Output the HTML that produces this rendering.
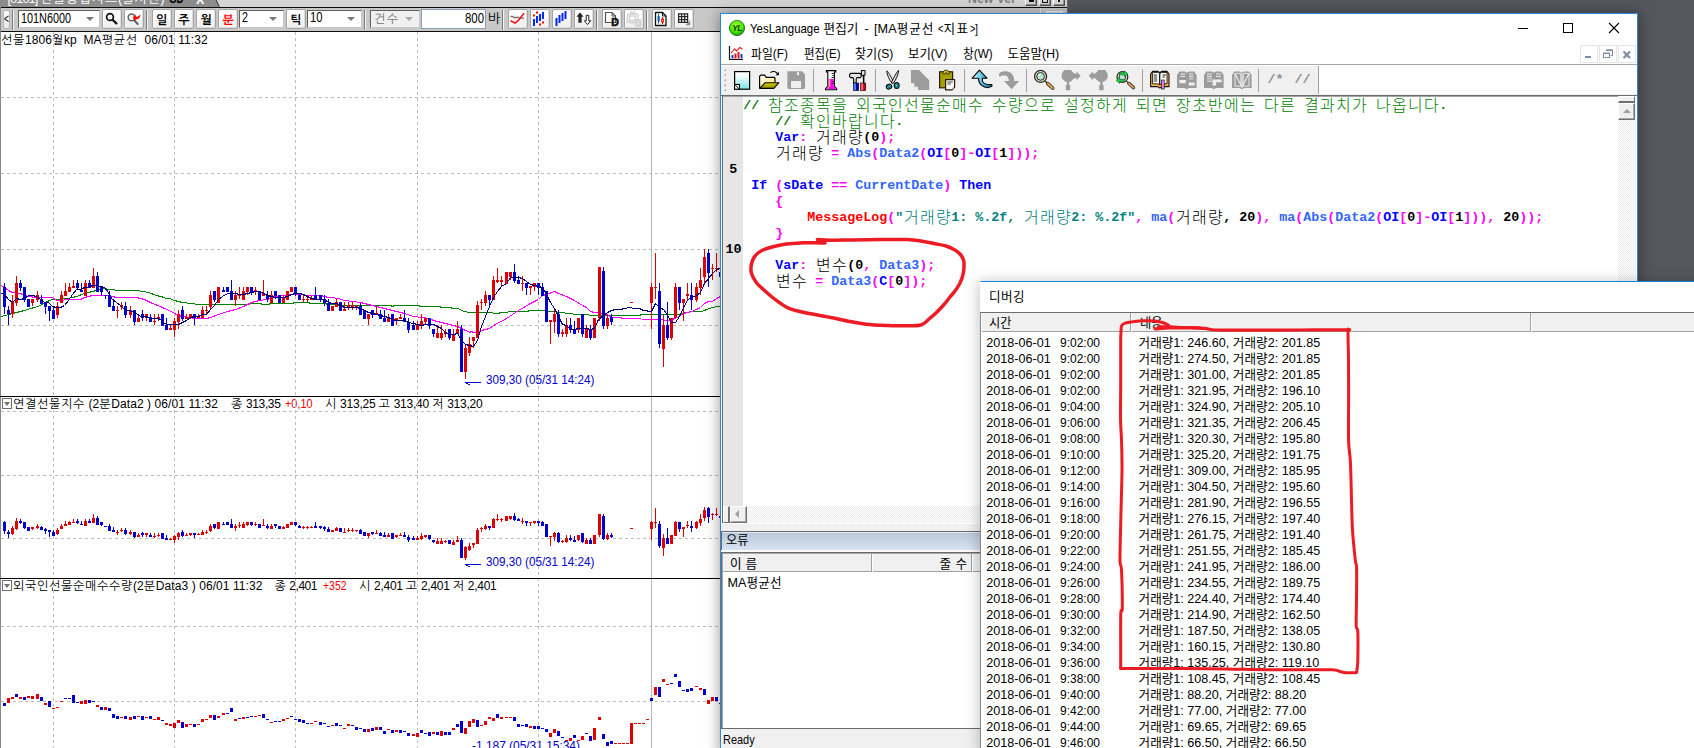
<!DOCTYPE html>
<html lang="ko"><head><meta charset="utf-8"><title>YesLanguage 편집기</title>
<style>
html,body{margin:0;padding:0;}
body{width:1694px;height:748px;overflow:hidden;background:#54575d;}
#root{position:relative;width:1694px;height:748px;overflow:hidden;background:#54575d;}
#root *{box-sizing:border-box;}
.a{position:absolute;}
.t{position:absolute;white-space:pre;line-height:16px;height:16px;color:#000;}
.gl{font-family:"Liberation Sans","NanumGothic",sans-serif;font-size:12px;}
.mg{font-family:"Liberation Sans","Noto Sans CJK KR",sans-serif;font-size:12.6px;}
.glb{font-family:"Liberation Sans","NanumGothic",sans-serif;font-size:12px;font-weight:bold;}
/* left app */
#tabbar{left:0;top:0;width:1068px;height:7px;background:#d4d4d4;overflow:hidden;}
#tab{left:0;top:0;width:222px;height:7px;background:#8c8c8c;}
#ltool{left:0;top:8px;width:1068px;height:23px;background:#c8c8c8;}
.btn{position:absolute;top:9px;height:20px;width:20px;border:1px solid #a4a4a4;border-radius:2px;background:linear-gradient(#fff,#fff 48%,#f2f2f2 52%,#f0f0f0);box-shadow:inset 1px 1px 0 0 #fff,inset -1px -1px 0 0 #dedede;}
.cmb{position:absolute;top:10px;height:18px;background:#fff;border:1px solid #c8c8c8;border-top:1px solid #606060;border-left:1px solid #606060;}
.sep{position:absolute;top:10px;height:20px;width:2px;border-left:1px solid #7a7a7a;border-right:1px solid #f4f4f4;}
.arr{position:absolute;width:0;height:0;border-left:4px solid transparent;border-right:4px solid transparent;border-top:4px solid #7a7a7a;}
#chartbg{left:0;top:32px;width:720px;height:716px;background:#fff;}
#edwin{left:720px;top:13px;width:918px;height:740px;background:#fff;border:1px solid #2f86d6;box-shadow:0 1px 13px 1px rgba(0,0,0,0.36);}
#dbwin{left:980px;top:281px;width:720px;height:470px;background:#fff;border-top:1px solid #1c82d8;border-left:1px solid #d0d8e0;box-shadow:0 2px 12px 2px rgba(0,0,0,0.22);}
.cl{position:absolute;white-space:pre;font-family:"Liberation Mono",monospace;font-weight:bold;font-size:13.333px;line-height:16px;height:16px;}
.ck{position:absolute;white-space:pre;font-family:"Liberation Mono","Noto Sans CJK KR",monospace;font-weight:300;font-size:16px;letter-spacing:1.28px;line-height:16px;height:16px;}

</style></head>
<body>
<div id="root">
<div class="a" id="tabbar"><div class="a" id="tab"></div>
<div class="a" style="left:215.5px;top:-6px;width:14px;height:14px;background:#d4d4d4;border-left:1px solid #222;transform:skewX(26deg)"></div>
<div class="t" style="left:7.50px;top:-9.20px;font-family:'Liberation Sans','NanumGothic',sans-serif;font-size:12px;font-size:13px;letter-spacing:-1.047px;color:#fff;line-height:16px;height:16px">[0101] <span style="letter-spacing:0.780px">선물종합차트</span>(<span style="letter-spacing:0.780px">실시간</span>)</div>
<div class="t" style="left:169.00px;top:-8.90px;font-family:'Liberation Sans','NanumGothic',sans-serif;font-size:12px;font-weight:bold;font-size:12px;transform:scaleX(0.8056);transform-origin:0 50%;line-height:16px;height:16px">GD</div>
<div class="t" style="left:196.00px;top:-8.00px;font-family:'Liberation Sans','NanumGothic',sans-serif;font-size:12px;font-weight:bold;font-size:12.5px;letter-spacing:0.000px;color:#fff;line-height:16px;height:16px">X</div>
<div class="t" style="left:968.00px;top:-9.00px;font-family:'Liberation Sans','NanumGothic',sans-serif;font-size:12px;font-weight:bold;font-size:13px;transform:scaleX(0.9487);transform-origin:0 50%;color:#7e7e7e;line-height:16px;height:16px">New Ver</div>
<div class="a" style="left:1025px;top:-6px;width:12px;height:12px;background:#d6d6d6;border:1px solid #fff;border-right:1px solid #505050;border-bottom:1px solid #505050;box-shadow:inset -1px -1px 0 #909090;"></div>
<div class="a" style="left:1039px;top:-6px;width:12px;height:12px;background:#d6d6d6;border:1px solid #fff;border-right:1px solid #505050;border-bottom:1px solid #505050;box-shadow:inset -1px -1px 0 #909090;"></div>
<div class="a" style="left:1053px;top:-6px;width:12px;height:12px;background:#d6d6d6;border:1px solid #fff;border-right:1px solid #505050;border-bottom:1px solid #505050;box-shadow:inset -1px -1px 0 #909090;"></div>
<div class="a" style="left:1029px;top:-2px;width:5px;height:4px;background:#111;"></div>
<div class="a" style="left:1042px;top:-3px;width:6px;height:6px;background:transparent;border:1px solid #111;border-top:2px solid #111;"></div>
<div class="a" style="left:1058px;top:-2px;width:2px;height:4px;background:#111;"></div>
</div>
<div class="a" style="left:0px;top:7px;width:1068px;height:1px;background:#0c0c0c;"></div>
<div class="a" id="ltool"></div>
<div class="a" style="left:1046px;top:11px;width:17px;height:3px;background:#dcdcdc;border:1px solid #f4f4f4;border-bottom:none;"></div>
<div class="a" style="left:1040px;top:8px;width:1px;height:6px;background:#e4e4e4;"></div>
<div class="a" style="left:1067px;top:0px;width:1px;height:14px;background:#6a6a6a;"></div>
<div class="a" style="left:0px;top:31px;width:720px;height:1px;background:#0c0c0c;"></div>
<div class="a" id="chartbg"></div>
<div class="a" style="left:3px;top:10px;width:7px;height:19px;border:1px solid #b4b4b4;border-radius:2px;background:linear-gradient(#fefefe,#e6e6e6)"></div>
<div class="sep" style="left:12px"></div>
<div class="cmb" style="left:18px;width:82px;background:#fff"></div>
<div class="btn" style="left:102px"></div>
<div class="btn" style="left:124px"></div>
<div class="sep" style="left:146px"></div>
<div class="btn" style="left:152px"></div>
<div class="btn" style="left:174px"></div>
<div class="btn" style="left:196px"></div>
<div class="btn" style="left:218px"></div>
<div class="cmb" style="left:239px;width:45px;background:#fff"></div>
<div class="btn" style="left:286px"></div>
<div class="cmb" style="left:307px;width:55px;background:#fff"></div>
<div class="sep" style="left:364px"></div>
<div class="cmb" style="left:370px;width:50px;background:#f0f0f0"></div>
<div class="a" style="left:421px;top:9px;width:65px;height:20px;background:#fff;border:1px solid #909cb6;"></div>
<div class="sep" style="left:502px"></div>
<div class="btn" style="left:508px"></div>
<div class="btn" style="left:530px"></div>
<div class="btn" style="left:552px"></div>
<div class="btn" style="left:574px"></div>
<div class="sep" style="left:596px"></div>
<div class="btn" style="left:602px"></div>
<div class="btn" style="left:624px"></div>
<div class="sep" style="left:646px"></div>
<div class="btn" style="left:652px"></div>
<div class="btn" style="left:674px"></div>
<svg class="a" style="left:102px;top:9px" width="20" height="20" viewBox="0 0 20 20"><circle cx="8" cy="8" r="3.4" fill="none" stroke="#111" stroke-width="1.7"/><path d="M10.8 11l3.6 3.4" stroke="#111" stroke-width="2.2" stroke-linecap="round"/></svg>
<svg class="a" style="left:124px;top:9px" width="20" height="20" viewBox="0 0 20 20"><circle cx="7.6" cy="8.4" r="3.4" fill="none" stroke="#606060" stroke-width="1.6"/><path d="M10.5 11.6l3.2 3.4" stroke="#606060" stroke-width="2" stroke-linecap="round"/><path d="M8.6 8.4l3-3v2.2c2.4.4 3.6-.4 4.6-2.4c.4 3.2-1.6 5.2-4.6 5.2v2z" fill="#f00"/></svg>
<svg class="a" style="left:508px;top:9px" width="20" height="20" viewBox="0 0 20 20"><path d="M2.5 7.5h2l1.5 1h4.5l1 .6h4.5" fill="none" stroke="#707070" stroke-width="1.4"/><path d="M2.5 11.6l4.6 2.6l3.4-3l5.6-7" fill="none" stroke="#f00" stroke-width="1.5"/></svg>
<svg class="a" style="left:530px;top:9px" width="20" height="20" viewBox="0 0 20 20"><path d="M4 10v7M7 7v7M10 5v7M13 3v7" stroke="#0028ff" stroke-width="2" fill="none"/><path d="M3 5.5h2v2h-2zM6 2.5h2v2h-2zM9 14.5h2v2h-2zM12 12.5h2v2h-2z" fill="#f00"/></svg>
<svg class="a" style="left:552px;top:9px" width="20" height="20" viewBox="0 0 20 20"><path d="M4.5 9v8M7.5 6v8M10.5 4v8M13.5 2v8" stroke="#0028ff" stroke-width="2" fill="none"/></svg>
<svg class="a" style="left:574px;top:9px" width="20" height="20" viewBox="0 0 20 20"><path d="M6 3.5l3.6 4.2h-2v6h-3.2v-6h-2z" fill="#222"/><path d="M13.5 15.6l-3.2-3.8h1.9v-5.4h2.6v5.4h1.9z" fill="#fff" stroke="#222" stroke-width="1"/></svg>
<svg class="a" style="left:602px;top:9px" width="20" height="20" viewBox="0 0 20 20"><path d="M3.5 3.5h6.5l3.5 3.5v6.5h-10z" fill="#fff" stroke="#555" stroke-width="1.2"/><path d="M10 3.5v3.5h3.5" fill="none" stroke="#555" stroke-width="1"/><text x="9.2" y="17.2" font-family="Liberation Sans,sans-serif" font-weight="bold" font-size="10.5" fill="#111" stroke="#111" stroke-width="0.6">D</text></svg>
<svg class="a" style="left:624px;top:9px" width="20" height="20" viewBox="0 0 20 20"><g fill="none" stroke="#d0d0d0" stroke-width="1.3"><path d="M6 2l2.5 2.5L11 2"/><rect x="3.5" y="5" width="10.5" height="8.5" rx="1"/><rect x="5.5" y="7" width="6" height="4.5"/><path d="M12 11h4.5v6H12z" fill="#ddd"/></g></svg>
<svg class="a" style="left:652px;top:9px" width="20" height="20" viewBox="0 0 20 20"><path d="M3.5 3.5h7l3.5 3.5v9.5h-10.5z" fill="#fff" stroke="#111" stroke-width="1.3"/><path d="M10.5 3.5v3.5h3.5" fill="none" stroke="#111" stroke-width="1"/><path d="M6.5 5v9.5" stroke="#0a64a0" stroke-width="1"/><rect x="5.5" y="7" width="2.2" height="5.5" fill="#0a64a0"/><path d="M10.5 8v7" stroke="#f00" stroke-width="1"/><rect x="9.6" y="10" width="1.9" height="3" fill="#fff" stroke="#f00" stroke-width="0.9"/></svg>
<svg class="a" style="left:674px;top:9px" width="20" height="20" viewBox="0 0 20 20"><rect x="4" y="4.3" width="10.2" height="9.7" fill="#fff"/><g stroke="#282828" stroke-width="1.25" fill="none"><path d="M4.6 4.900h9v8.500h-9zM4.600 7.700h9M4.600 10.600h9M7.600 4.900v8.500M10.600 4.900v8.500"/></g><path d="M16.200 11.400v4.800h-4.800z" fill="#8a8a8a"/></svg>
<div class="arr" style="left:86px;top:17px;border-top-color:#7a7a7a"></div>
<div class="arr" style="left:269px;top:17px;border-top-color:#7a7a7a"></div>
<div class="arr" style="left:347px;top:17px;border-top-color:#7a7a7a"></div>
<div class="arr" style="left:405px;top:17px;border-top-color:#a8a8a8"></div>
<div class="t" style="left:3.60px;top:10.80px;font-family:'Liberation Sans','NanumGothic',sans-serif;font-size:12px;font-size:12px;transform:scaleX(0.7127);transform-origin:0 50%;line-height:16px;height:16px">&lt;</div>
<div class="t" style="left:21.00px;top:10.00px;font-family:'Liberation Sans','NanumGothic',sans-serif;font-size:12px;font-size:14px;transform:scaleX(0.7737);transform-origin:0 50%;line-height:16px;height:16px">101N6000</div>
<div class="t" style="left:156.00px;top:11.80px;font-family:'Liberation Sans','NanumGothic',sans-serif;font-size:12px;font-weight:bold;line-height:16px;height:16px">일</div>
<div class="t" style="left:178.30px;top:11.80px;font-family:'Liberation Sans','NanumGothic',sans-serif;font-size:12px;font-weight:bold;line-height:16px;height:16px">주</div>
<div class="t" style="left:200.50px;top:11.80px;font-family:'Liberation Sans','NanumGothic',sans-serif;font-size:12px;font-weight:bold;line-height:16px;height:16px">월</div>
<div class="t" style="left:222.50px;top:11.80px;font-family:'Liberation Sans','NanumGothic',sans-serif;font-size:12px;font-weight:bold;color:#f00;line-height:16px;height:16px">분</div>
<div class="t" style="left:290.50px;top:11.80px;font-family:'Liberation Sans','NanumGothic',sans-serif;font-size:12px;font-weight:bold;line-height:16px;height:16px">틱</div>
<div class="t" style="left:242.00px;top:9.20px;font-family:'Liberation Sans','NanumGothic',sans-serif;font-size:12px;font-size:14px;transform:scaleX(0.7695);transform-origin:0 50%;line-height:16px;height:16px">2</div>
<div class="t" style="left:310.00px;top:9.20px;font-family:'Liberation Sans','NanumGothic',sans-serif;font-size:12px;font-size:14px;transform:scaleX(0.8024);transform-origin:0 50%;line-height:16px;height:16px">10</div>
<div class="t" style="left:374.00px;top:11.00px;font-family:'Liberation Sans','NanumGothic',sans-serif;font-size:12px;letter-spacing:1.438px;color:#707070;line-height:16px;height:16px">건수</div>
<div class="t" style="left:465.20px;top:10.00px;font-family:'Liberation Sans','NanumGothic',sans-serif;font-size:12px;font-size:14px;transform:scaleX(0.8134);transform-origin:0 50%;line-height:16px;height:16px">800</div>
<div class="t" style="left:488.00px;top:10.60px;font-family:'Liberation Sans','NanumGothic',sans-serif;font-size:12px;font-size:13.4px;letter-spacing:0.000px;line-height:16px;height:16px">바</div>
<div class="t" style="left:1.00px;top:32.00px;font-family:'Liberation Sans','NanumGothic',sans-serif;font-size:12px;letter-spacing:0.063px;line-height:16px;height:16px"><span style="letter-spacing:0.719px">선물</span>1806<span style="letter-spacing:0.719px">월</span>kp  MA<span style="letter-spacing:0.719px">평균선</span>  06/01 11:32</div>
<div class="t" style="left:13.00px;top:396.00px;font-family:'Liberation Sans','NanumGothic',sans-serif;font-size:12px;letter-spacing:0.082px;line-height:16px;height:16px"><span style="letter-spacing:0.719px">연결선물지수</span> (2<span style="letter-spacing:0.719px">분</span>Data2 ) 06/01 11:32</div>
<div class="t" style="left:231.00px;top:396.00px;font-family:'Liberation Sans','NanumGothic',sans-serif;font-size:12px;letter-spacing:-0.364px;line-height:16px;height:16px"><span style="letter-spacing:0.719px">종</span> 313,35</div>
<div class="t" style="left:285.00px;top:396.00px;font-family:'Liberation Sans','NanumGothic',sans-serif;font-size:12px;transform:scaleX(0.9053);transform-origin:0 50%;color:#f00000;line-height:16px;height:16px">+0,10</div>
<div class="t" style="left:325.00px;top:396.00px;font-family:'Liberation Sans','NanumGothic',sans-serif;font-size:12px;letter-spacing:-0.230px;line-height:16px;height:16px"><span style="letter-spacing:0.719px">시</span> 313,25 <span style="letter-spacing:0.719px">고</span> 313,40 <span style="letter-spacing:0.719px">저</span> 313,20</div>
<div class="t" style="left:13.00px;top:578.00px;font-family:'Liberation Sans','NanumGothic',sans-serif;font-size:12px;letter-spacing:0.078px;line-height:16px;height:16px"><span style="letter-spacing:0.719px">외국인선물순매수수량</span>(2<span style="letter-spacing:0.719px">분</span>Data3 ) 06/01 11:32</div>
<div class="t" style="left:274.50px;top:578.00px;font-family:'Liberation Sans','NanumGothic',sans-serif;font-size:12px;letter-spacing:-0.479px;line-height:16px;height:16px"><span style="letter-spacing:0.719px">종</span> 2,401</div>
<div class="t" style="left:322.50px;top:578.00px;font-family:'Liberation Sans','NanumGothic',sans-serif;font-size:12px;transform:scaleX(0.8694);transform-origin:0 50%;color:#f00000;line-height:16px;height:16px">+352</div>
<div class="t" style="left:359.00px;top:578.00px;font-family:'Liberation Sans','NanumGothic',sans-serif;font-size:12px;letter-spacing:-0.263px;line-height:16px;height:16px"><span style="letter-spacing:0.719px">시</span> 2,401 <span style="letter-spacing:0.719px">고</span> 2,401 <span style="letter-spacing:0.719px">저</span> 2,401</div>
<div class="t" style="left:485.50px;top:372.00px;font-family:'Liberation Sans','NanumGothic',sans-serif;font-size:12px;transform:scaleX(0.9738);transform-origin:0 50%;color:#0000d0;line-height:16px;height:16px">309,30 (05/31 14:24)</div>
<div class="t" style="left:485.50px;top:554.00px;font-family:'Liberation Sans','NanumGothic',sans-serif;font-size:12px;transform:scaleX(0.9738);transform-origin:0 50%;color:#0000d0;line-height:16px;height:16px">309,30 (05/31 14:24)</div>
<div class="t" style="left:472.00px;top:737.50px;font-family:'Liberation Sans','NanumGothic',sans-serif;font-size:12px;letter-spacing:-0.039px;color:#0000d0;line-height:16px;height:16px">-1,187 (05/31 15:34)</div>
<div class="a" style="left:2px;top:398px;width:10px;height:11px;border:1px solid #707070;background:#fff"><div class="arr" style="left:1px;top:3px;border-left-width:3px;border-right-width:3px;border-top-color:#707070"></div></div>
<div class="a" style="left:2px;top:580px;width:10px;height:11px;border:1px solid #707070;background:#fff"><div class="arr" style="left:1px;top:3px;border-left-width:3px;border-right-width:3px;border-top-color:#707070"></div></div>
<div class="a" style="left:0px;top:0px;width:1px;height:748px;background:#8a8a8a;"></div>
<svg class="a" style="left:0;top:32px" width="720" height="716" viewBox="0 32 720 716" shape-rendering="crispEdges">
<path d="M53.5 32V748M174.5 32V748M295.5 32V748M417.5 32V748M538.5 32V748M1 97.5H720M1 173.5H720M1 249.5H720M1 325.5H720M1 411.5H720M1 475.5H720M1 538.5H720M1 626.5H720M1 701.5H720" stroke="#bdbdbd" stroke-width="1" stroke-dasharray="3 3" fill="none"/>
<path d="M651.5 32V748" stroke="#b4b4b4" stroke-width="1" fill="none"/>
<path d="M0 396.5H720M0 578.5H720" stroke="#000" stroke-width="1" fill="none"/>
<polyline points="1.5,316.5 8.5,314.5 12.5,313.5 24.5,310.5 40.5,305.5 44.5,302.5 52.5,299.5 68.5,298.5 76.5,296.5 84.5,293.5 92.5,291.5 96.5,290.5 100.5,289.5 104.5,288.5 108.5,289.5 120.5,290.5 136.5,290.5 148.5,292.5 156.5,295.5 164.5,297.5 165.5,298.5 169.5,298.5 174.5,300.5 182.5,302.5 190.5,303.5 198.5,304.5 247.5,304.5 251.5,303.5 259.5,303.5 263.5,304.5 267.5,304.5 271.5,303.5 291.5,303.5 295.5,302.5 307.5,302.5 311.5,303.5 324.5,303.5 328.5,304.5 330.5,304.5 340.5,305.5 390.5,305.5 392.5,306.5 394.5,305.5 418.5,305.5 420.5,306.5 439.5,306.5 441.5,307.5 450.5,307.5 452.5,308.5 458.5,308.5 461.5,310.5 468.5,312.5 470.5,312.5 470.5,312.5 486.5,312.5 498.5,313.5 500.5,312.5 507.5,312.5 508.5,311.5 527.5,311.5 529.5,310.5 546.5,310.5 547.5,311.5 556.5,311.5 557.5,312.5 564.5,312.5 565.5,313.5 572.5,313.5 573.5,314.5 588.5,314.5 589.5,315.5 600.5,315.5 601.5,315.5 639.5,315.5 641.5,314.5 679.5,314.5 681.5,313.5 685.5,312.5 693.5,311.5 701.5,311.5 709.5,308.5 716.5,306.5 720.5,306.5 723.5,305.5" stroke="#008000" stroke-width="1" fill="none"/>
<polyline points="1.5,285.5 4.5,287.5 8.5,290.5 12.5,292.5 20.5,293.5 24.5,295.5 28.5,296.5 36.5,297.5 52.5,297.5 56.5,300.5 72.5,299.5 80.5,299.5 84.5,297.5 92.5,295.5 108.5,295.5 116.5,297.5 136.5,297.5 144.5,299.5 152.5,303.5 160.5,306.5 164.5,308.5 169.5,310.5 174.5,313.5 178.5,315.5 182.5,316.5 190.5,317.5 194.5,318.5 206.5,318.5 210.5,317.5 218.5,314.5 227.5,311.5 235.5,309.5 243.5,306.5 251.5,302.5 259.5,300.5 267.5,299.5 271.5,297.5 275.5,296.5 283.5,295.5 291.5,294.5 299.5,294.5 307.5,295.5 320.5,295.5 324.5,296.5 328.5,297.5 330.5,297.5 338.5,298.5 344.5,300.5 352.5,301.5 360.5,302.5 368.5,304.5 376.5,306.5 384.5,308.5 392.5,310.5 400.5,312.5 404.5,313.5 413.5,316.5 421.5,317.5 429.5,318.5 433.5,320.5 441.5,322.5 449.5,324.5 457.5,326.5 461.5,328.5 465.5,330.5 470.5,332.5 470.5,331.5 474.5,332.5 481.5,330.5 489.5,328.5 493.5,325.5 506.5,318.5 518.5,310.5 530.5,303.5 538.5,299.5 542.5,295.5 546.5,294.5 554.5,291.5 558.5,293.5 566.5,296.5 574.5,300.5 582.5,305.5 586.5,307.5 590.5,311.5 594.5,312.5 599.5,312.5 603.5,314.5 607.5,314.5 611.5,317.5 620.5,317.5 622.5,318.5 659.5,319.5 667.5,320.5 675.5,318.5 683.5,313.5 691.5,311.5 696.5,309.5 700.5,307.5 704.5,303.5 708.5,301.5 712.5,301.5 716.5,298.5 720.5,296.5 723.5,294.5" stroke="#ff00ff" stroke-width="1" fill="none"/>
<path d="M12 295h1v23h-1zM11 302h3v12h-3zM12 526h1v9h-1zM11 528h3v6h-3zM16 276h1v30h-1zM15 283h3v20h-3zM16 518h1v12h-1zM15 521h3v8h-3zM32 299h1v7h-1zM31 299h3v4h-3zM32 527h1v3h-1zM31 527h3v2h-3zM37 291h1v11h-1zM36 295h3v5h-3zM37 524h1v5h-1zM36 526h3v2h-3zM57 302h1v16h-1zM56 306h3v9h-3zM57 528h1v7h-1zM56 530h3v4h-3zM61 291h1v12h-1zM60 295h3v8h-3zM61 524h1v5h-1zM60 526h3v3h-3zM65 283h1v13h-1zM64 291h3v5h-3zM65 521h1v5h-1zM64 524h3v2h-3zM69 283h1v9h-1zM68 287h3v5h-3zM69 521h1v4h-1zM68 522h3v3h-3zM73 280h1v8h-1zM72 286h3v2h-3zM73 519h1v4h-1zM72 522h3v1h-3zM85 280h1v16h-1zM84 283h3v13h-3zM85 519h1v7h-1zM84 521h3v5h-3zM93 268h1v20h-1zM92 276h3v12h-3zM93 514h1v9h-1zM92 518h3v5h-3zM117 306h1v12h-1zM116 310h3v1h-3zM117 530h1v5h-1zM116 532h3v1h-3zM121 302h1v8h-1zM120 305h3v2h-3zM121 528h1v4h-1zM120 530h3v1h-3zM130 306h1v12h-1zM129 310h3v5h-3zM130 530h1v5h-1zM129 532h3v2h-3zM138 314h1v8h-1zM137 318h3v4h-3zM138 533h1v4h-1zM137 535h3v2h-3zM146 314h1v7h-1zM145 314h3v4h-3zM146 533h1v4h-1zM145 533h3v2h-3zM154 314h1v11h-1zM153 321h3v1h-3zM154 533h1v5h-1zM153 536h3v1h-3zM158 314h1v7h-1zM157 317h3v2h-3zM158 533h1v4h-1zM157 535h3v1h-3zM170 325h1v5h-1zM169 328h3v2h-3zM170 538h1v2h-1zM169 539h3v1h-3zM174 318h1v19h-1zM173 321h3v9h-3zM174 535h1v8h-1zM173 536h3v4h-3zM178 310h1v19h-1zM177 314h3v8h-3zM178 532h1v8h-1zM177 533h3v4h-3zM186 314h1v5h-1zM185 317h3v2h-3zM186 533h1v3h-1zM185 535h3v1h-3zM190 314h1v5h-1zM189 314h3v4h-3zM190 533h1v3h-1zM189 533h3v2h-3zM198 314h1v4h-1zM197 316h3v2h-3zM198 533h1v2h-1zM197 534h3v1h-3zM202 306h1v12h-1zM201 310h3v8h-3zM202 530h1v5h-1zM201 532h3v3h-3zM206 306h1v8h-1zM205 310h3v1h-3zM206 530h1v4h-1zM205 532h3v1h-3zM210 291h1v19h-1zM209 295h3v12h-3zM210 524h1v8h-1zM209 526h3v5h-3zM217 287h3v16h-3zM217 522h3v7h-3zM235 291h1v15h-1zM234 295h3v5h-3zM235 524h1v7h-1zM234 526h3v2h-3zM239 287h1v12h-1zM238 294h3v2h-3zM239 522h1v6h-1zM238 525h3v1h-3zM243 287h1v13h-1zM242 291h3v9h-3zM243 522h1v6h-1zM242 524h3v4h-3zM247 287h1v8h-1zM246 287h3v5h-3zM247 522h1v4h-1zM246 522h3v3h-3zM255 287h1v8h-1zM254 290h3v2h-3zM255 522h1v4h-1zM254 524h3v1h-3zM263 280h1v16h-1zM262 294h3v2h-3zM263 519h1v7h-1zM262 525h3v1h-3zM271 291h1v12h-1zM270 295h3v8h-3zM271 524h1v5h-1zM270 526h3v3h-3zM283 295h1v8h-1zM282 298h3v5h-3zM283 526h1v3h-1zM282 527h3v2h-3zM286 291h3v9h-3zM286 524h3v4h-3zM290 287h3v5h-3zM290 522h3v3h-3zM303 295h1v7h-1zM302 299h3v1h-3zM303 526h1v3h-1zM302 527h3v1h-3zM307 295h1v7h-1zM306 299h3v1h-3zM307 526h1v3h-1zM306 527h3v1h-3zM311 296h1v4h-1zM310 298h3v2h-3zM311 526h1v2h-1zM310 527h3v1h-3zM331 306h3v5h-3zM331 530h3v2h-3zM336 299h1v8h-1zM335 302h3v5h-3zM336 527h1v4h-1zM335 528h3v3h-3zM344 302h1v9h-1zM343 309h3v2h-3zM344 528h1v4h-1zM343 532h3v1h-3zM348 302h1v8h-1zM347 305h3v2h-3zM348 528h1v4h-1zM347 530h3v1h-3zM352 302h1v8h-1zM351 305h3v2h-3zM352 528h1v4h-1zM351 530h3v1h-3zM356 305h1v5h-1zM355 306h3v1h-3zM356 530h1v2h-1zM355 530h3v1h-3zM368 314h1v11h-1zM367 314h3v5h-3zM368 533h1v5h-1zM367 533h3v3h-3zM376 306h1v9h-1zM375 313h3v2h-3zM376 530h1v4h-1zM375 533h3v1h-3zM388 314h1v8h-1zM387 318h3v4h-3zM388 533h1v4h-1zM387 535h3v2h-3zM396 318h1v7h-1zM395 318h3v3h-3zM396 535h1v3h-1zM395 535h3v2h-3zM400 314h1v5h-1zM399 317h3v2h-3zM400 533h1v3h-1zM399 535h3v1h-3zM417 321h1v9h-1zM416 325h3v5h-3zM417 536h1v4h-1zM416 538h3v2h-3zM421 314h1v15h-1zM420 321h3v5h-3zM421 533h1v7h-1zM420 536h3v3h-3zM425 318h1v6h-1zM424 318h3v4h-3zM425 535h1v3h-1zM424 535h3v2h-3zM437 325h1v13h-1zM436 333h3v5h-3zM437 538h1v6h-1zM436 541h3v3h-3zM441 325h1v15h-1zM440 333h3v5h-3zM441 538h1v6h-1zM440 541h3v3h-3zM445 329h1v8h-1zM444 332h3v2h-3zM445 540h1v3h-1zM444 541h3v1h-3zM453 329h1v12h-1zM452 334h3v7h-3zM453 540h1v5h-1zM452 542h3v3h-3zM457 321h1v13h-1zM456 329h3v5h-3zM457 536h1v6h-1zM456 540h3v2h-3zM465 344h1v35h-1zM464 348h3v24h-3zM465 546h1v14h-1zM464 547h3v11h-3zM469 337h1v19h-1zM468 344h3v9h-3zM469 543h1v8h-1zM468 546h3v4h-3zM473 337h1v11h-1zM472 337h3v4h-3zM473 543h1v5h-1zM472 543h3v2h-3zM477 301h1v37h-1zM476 305h3v33h-3zM477 528h1v16h-1zM476 530h3v14h-3zM481 299h1v11h-1zM480 302h3v1h-3zM481 527h1v5h-1zM480 528h3v1h-3zM485 291h1v15h-1zM484 295h3v8h-3zM485 524h1v6h-1zM484 526h3v3h-3zM493 276h1v24h-1zM492 280h3v20h-3zM493 518h1v10h-1zM492 519h3v9h-3zM497 268h1v15h-1zM496 280h3v2h-3zM497 514h1v7h-1zM496 519h3v1h-3zM501 276h1v10h-1zM500 280h3v2h-3zM501 518h1v4h-1zM500 519h3v1h-3zM505 272h3v12h-3zM505 516h3v5h-3zM510 272h1v8h-1zM509 272h3v5h-3zM510 516h1v4h-1zM509 516h3v3h-3zM522 276h1v15h-1zM521 283h3v1h-3zM522 518h1v6h-1zM521 521h3v1h-3zM530 287h1v8h-1zM529 286h3v2h-3zM530 522h1v4h-1zM529 522h3v1h-3zM534 283h1v8h-1zM533 283h3v4h-3zM534 521h1v3h-1zM533 521h3v2h-3zM550 321h1v23h-1zM549 320h3v2h-3zM550 536h1v10h-1zM549 536h3v1h-3zM554 310h1v23h-1zM553 314h3v8h-3zM554 532h1v9h-1zM553 533h3v4h-3zM562 329h1v8h-1zM561 332h3v2h-3zM562 540h1v3h-1zM561 541h3v1h-3zM566 318h1v19h-1zM565 325h3v9h-3zM566 535h1v8h-1zM565 538h3v4h-3zM578 318h1v15h-1zM577 318h3v12h-3zM578 535h1v6h-1zM577 535h3v5h-3zM586 325h1v13h-1zM585 329h3v9h-3zM586 538h1v6h-1zM585 540h3v4h-3zM593 318h3v20h-3zM593 535h3v9h-3zM599 267h1v54h-1zM598 267h3v51h-3zM599 514h1v23h-1zM598 514h3v21h-3zM607 314h1v15h-1zM606 318h3v8h-3zM607 533h1v7h-1zM606 535h3v4h-3zM630 302h3v1h-3zM630 528h3v1h-3zM651 283h1v46h-1zM650 287h3v16h-3zM651 521h1v19h-1zM650 522h3v7h-3zM655 253h1v46h-1zM654 287h3v1h-3zM655 508h1v20h-1zM654 522h3v1h-3zM663 315h1v52h-1zM662 325h3v24h-3zM663 534h1v22h-1zM662 538h3v10h-3zM671 318h1v22h-1zM670 318h3v20h-3zM670 535h3v9h-3zM675 283h1v35h-1zM674 287h3v31h-3zM675 521h1v15h-1zM674 522h3v14h-3zM683 299h1v22h-1zM682 299h3v4h-3zM683 527h1v10h-1zM682 527h3v2h-3zM687 283h1v17h-1zM686 294h3v2h-3zM687 521h1v7h-1zM686 525h3v1h-3zM696 283h1v19h-1zM695 287h3v13h-3zM696 521h1v8h-1zM695 522h3v6h-3zM700 268h1v27h-1zM699 280h3v8h-3zM700 514h1v12h-1zM699 519h3v4h-3zM704 249h1v34h-1zM703 257h3v20h-3zM704 507h1v14h-1zM703 510h3v8h-3zM712 264h1v16h-1zM711 268h3v1h-3zM712 513h1v7h-1zM711 514h3v1h-3zM716 253h1v19h-1zM715 268h3v1h-3zM716 508h1v8h-1zM715 514h3v1h-3zM7 698h3v5h-3zM11 697h3v2h-3zM19 697h3v2h-3zM27 696h3v2h-3zM31 696h3v3h-3zM36 694h3v5h-3zM44 703h3v2h-3zM52 708h3v1h-3zM56 707h3v1h-3zM60 701h3v1h-3zM80 701h3v3h-3zM84 700h3v4h-3zM96 705h3v2h-3zM104 707h3v3h-3zM120 717h3v1h-3zM129 717h3v3h-3zM137 716h3v1h-3zM145 717h3v1h-3zM153 719h3v1h-3zM157 717h3v3h-3zM165 723h3v2h-3zM169 724h3v2h-3zM173 723h3v5h-3zM177 720h3v3h-3zM185 724h3v3h-3zM189 724h3v1h-3zM197 724h3v1h-3zM201 719h3v3h-3zM205 719h3v1h-3zM209 715h3v3h-3zM217 716h3v2h-3zM222 713h3v2h-3zM234 719h3v2h-3zM242 717h3v2h-3zM254 716h3v1h-3zM258 715h3v1h-3zM270 722h3v1h-3zM282 719h3v2h-3zM286 718h3v1h-3zM310 723h3v1h-3zM314 721h3v1h-3zM331 725h3v1h-3zM343 728h3v1h-3zM347 724h3v2h-3zM367 729h3v3h-3zM375 727h3v3h-3zM387 729h3v1h-3zM395 730h3v2h-3zM412 734h3v2h-3zM416 733h3v4h-3zM432 732h3v2h-3zM440 731h3v5h-3zM452 728h3v2h-3zM464 728h3v6h-3zM468 721h3v6h-3zM472 719h3v4h-3zM480 725h3v1h-3zM484 721h3v4h-3zM488 717h3v2h-3zM492 718h3v3h-3zM500 717h3v2h-3zM505 717h3v1h-3zM509 717h3v1h-3zM529 726h3v2h-3zM549 733h3v4h-3zM553 729h3v4h-3zM565 740h3v1h-3zM569 738h3v3h-3zM577 740h3v1h-3zM581 736h3v4h-3zM593 728h3v12h-3zM598 717h3v3h-3zM614 743h3v1h-3zM618 743h3v1h-3zM622 743h3v1h-3zM626 743h3v1h-3zM630 723h3v21h-3zM634 723h3v1h-3zM638 723h3v1h-3zM642 723h3v1h-3zM646 719h3v1h-3zM654 687h3v8h-3zM662 679h3v3h-3zM666 684h3v1h-3zM695 686h3v1h-3zM699 688h3v2h-3zM707 700h3v4h-3zM711 697h3v4h-3z" fill="#e00000"/>
<path d="M4 283h1v31h-1zM3 287h3v20h-3zM4 521h1v13h-1zM3 522h3v9h-3zM8 306h1v19h-1zM7 310h3v4h-3zM8 530h1v8h-1zM7 532h3v2h-3zM20 280h1v11h-1zM19 283h3v5h-3zM20 519h1v5h-1zM19 521h3v2h-3zM24 287h1v15h-1zM23 287h3v13h-3zM24 522h1v7h-1zM23 522h3v6h-3zM27 299h3v8h-3zM27 527h3v4h-3zM41 295h1v9h-1zM40 299h3v5h-3zM41 526h1v4h-1zM40 527h3v3h-3zM45 302h1v12h-1zM44 303h3v4h-3zM45 528h1v6h-1zM44 529h3v2h-3zM49 306h1v15h-1zM48 306h3v5h-3zM49 530h1v7h-1zM48 530h3v2h-3zM53 306h1v13h-1zM52 310h3v9h-3zM53 530h1v6h-1zM52 532h3v4h-3zM77 280h1v10h-1zM76 283h3v5h-3zM77 519h1v5h-1zM76 521h3v2h-3zM81 283h1v9h-1zM80 290h3v2h-3zM81 521h1v4h-1zM80 524h3v1h-3zM89 280h1v8h-1zM88 283h3v5h-3zM89 519h1v4h-1zM88 521h3v2h-3zM97 272h1v20h-1zM96 276h3v16h-3zM97 516h1v9h-1zM96 518h3v7h-3zM101 286h1v9h-1zM100 287h3v5h-3zM101 522h1v4h-1zM100 522h3v3h-3zM105 295h1v4h-1zM104 295h3v1h-3zM104 526h3v1h-3zM109 291h1v16h-1zM108 295h3v12h-3zM109 524h1v7h-1zM108 526h3v5h-3zM113 299h1v12h-1zM112 306h3v5h-3zM113 527h1v5h-1zM112 530h3v2h-3zM125 302h1v16h-1zM124 306h3v9h-3zM125 528h1v7h-1zM124 530h3v4h-3zM134 310h1v15h-1zM133 310h3v12h-3zM134 532h1v6h-1zM133 532h3v5h-3zM142 310h1v11h-1zM141 314h3v4h-3zM142 532h1v5h-1zM141 533h3v2h-3zM150 314h1v8h-1zM149 317h3v5h-3zM150 533h1v4h-1zM149 535h3v2h-3zM161 314h3v12h-3zM161 533h3v6h-3zM166 318h1v12h-1zM165 325h3v5h-3zM166 535h1v5h-1zM165 538h3v2h-3zM182 306h1v15h-1zM181 310h3v9h-3zM182 530h1v7h-1zM181 532h3v4h-3zM194 314h1v11h-1zM193 314h3v4h-3zM194 533h1v5h-1zM193 533h3v2h-3zM214 291h1v11h-1zM213 291h3v9h-3zM214 524h1v5h-1zM213 524h3v4h-3zM223 287h1v5h-1zM222 290h3v2h-3zM223 522h1v3h-1zM222 524h3v1h-3zM226 287h3v5h-3zM226 522h3v3h-3zM231 280h1v20h-1zM230 291h3v9h-3zM231 519h1v9h-1zM230 524h3v4h-3zM251 287h1v8h-1zM250 287h3v6h-3zM251 522h1v4h-1zM250 522h3v3h-3zM258 291h3v9h-3zM258 524h3v4h-3zM267 291h1v11h-1zM266 295h3v4h-3zM267 524h1v5h-1zM266 526h3v2h-3zM275 291h1v8h-1zM274 291h3v5h-3zM275 524h1v4h-1zM274 524h3v2h-3zM278 295h3v8h-3zM278 526h3v3h-3zM295 287h1v9h-1zM294 287h3v6h-3zM295 522h1v4h-1zM294 522h3v3h-3zM299 293h1v7h-1zM298 295h3v5h-3zM299 525h1v3h-1zM298 526h3v2h-3zM315 287h1v13h-1zM314 295h3v5h-3zM315 522h1v6h-1zM314 526h3v2h-3zM320 295h1v7h-1zM319 295h3v4h-3zM320 526h1v3h-1zM319 526h3v2h-3zM324 295h1v11h-1zM323 299h3v4h-3zM324 526h1v5h-1zM323 527h3v2h-3zM328 299h1v12h-1zM327 303h3v8h-3zM328 527h1v5h-1zM327 529h3v3h-3zM339 302h3v9h-3zM339 528h3v4h-3zM360 303h1v12h-1zM359 306h3v9h-3zM360 529h1v5h-1zM359 530h3v4h-3zM363 310h3v9h-3zM363 532h3v4h-3zM372 310h1v8h-1zM371 310h3v5h-3zM372 532h1v3h-1zM371 532h3v2h-3zM380 310h1v9h-1zM379 314h3v5h-3zM380 532h1v4h-1zM379 533h3v3h-3zM384 310h1v12h-1zM383 318h3v4h-3zM384 532h1v5h-1zM383 535h3v2h-3zM391 314h3v12h-3zM391 533h3v6h-3zM404 310h1v12h-1zM403 318h3v4h-3zM404 532h1v5h-1zM403 535h3v2h-3zM408 318h1v15h-1zM407 322h3v8h-3zM408 535h1v7h-1zM407 537h3v3h-3zM413 321h1v9h-1zM412 325h3v5h-3zM413 536h1v4h-1zM412 538h3v2h-3zM429 318h1v11h-1zM428 318h3v8h-3zM429 535h1v5h-1zM428 535h3v4h-3zM433 329h1v8h-1zM432 329h3v5h-3zM433 540h1v3h-1zM432 540h3v2h-3zM449 329h1v11h-1zM448 329h3v9h-3zM448 540h3v4h-3zM461 325h1v47h-1zM460 329h3v43h-3zM461 538h1v20h-1zM460 540h3v18h-3zM489 295h1v11h-1zM488 295h3v5h-3zM489 526h1v4h-1zM488 526h3v2h-3zM514 264h1v19h-1zM513 272h3v9h-3zM514 513h1v8h-1zM513 516h3v4h-3zM518 276h1v8h-1zM517 280h3v4h-3zM518 518h1v3h-1zM517 519h3v2h-3zM526 283h1v12h-1zM525 283h3v5h-3zM526 521h1v5h-1zM525 521h3v2h-3zM538 283h1v12h-1zM537 283h3v5h-3zM538 521h1v5h-1zM537 521h3v2h-3zM542 283h1v13h-1zM541 287h3v9h-3zM542 521h1v5h-1zM541 522h3v4h-3zM545 291h3v31h-3zM545 524h3v13h-3zM558 310h1v27h-1zM557 314h3v20h-3zM558 532h1v11h-1zM557 533h3v9h-3zM570 318h1v15h-1zM569 325h3v5h-3zM570 535h1v6h-1zM569 538h3v2h-3zM574 321h1v13h-1zM573 329h3v5h-3zM574 536h1v6h-1zM573 540h3v2h-3zM582 314h1v23h-1zM581 314h3v20h-3zM582 533h1v10h-1zM581 533h3v9h-3zM590 325h1v15h-1zM589 329h3v9h-3zM590 538h1v6h-1zM589 540h3v4h-3zM603 267h1v62h-1zM602 271h3v55h-3zM603 514h1v26h-1zM602 516h3v23h-3zM611 314h1v11h-1zM610 317h3v5h-3zM611 533h1v5h-1zM610 535h3v2h-3zM659 283h1v65h-1zM658 291h3v53h-3zM659 521h1v27h-1zM658 524h3v22h-3zM667 302h1v38h-1zM666 325h3v13h-3zM667 528h1v16h-1zM666 538h3v6h-3zM679 287h1v23h-1zM678 287h3v16h-3zM679 522h1v10h-1zM678 522h3v7h-3zM691 283h1v27h-1zM690 295h3v5h-3zM691 521h1v11h-1zM690 526h3v2h-3zM708 249h1v38h-1zM707 253h3v20h-3zM708 507h1v16h-1zM707 508h3v9h-3zM719 272h3v5h-3zM719 516h3v2h-3zM3 703h3v3h-3zM15 694h3v3h-3zM23 697h3v3h-3zM40 697h3v4h-3zM48 701h3v6h-3zM64 698h3v1h-3zM68 698h3v1h-3zM72 695h3v8h-3zM76 702h3v1h-3zM88 700h3v3h-3zM92 701h3v1h-3zM100 707h3v3h-3zM108 708h3v3h-3zM112 714h3v4h-3zM116 716h3v3h-3zM124 716h3v3h-3zM133 716h3v3h-3zM141 716h3v4h-3zM149 716h3v3h-3zM161 720h3v1h-3zM181 722h3v6h-3zM193 724h3v3h-3zM213 715h3v5h-3zM226 713h3v1h-3zM230 708h3v4h-3zM238 718h3v1h-3zM246 717h3v1h-3zM250 716h3v1h-3zM262 714h3v4h-3zM266 719h3v1h-3zM274 721h3v1h-3zM278 721h3v1h-3zM290 716h3v1h-3zM294 719h3v1h-3zM298 719h3v3h-3zM302 720h3v3h-3zM306 723h3v1h-3zM319 722h3v3h-3zM323 723h3v1h-3zM327 726h3v1h-3zM335 723h3v3h-3zM339 725h3v1h-3zM351 725h3v1h-3zM355 727h3v3h-3zM359 728h3v1h-3zM363 729h3v3h-3zM371 728h3v3h-3zM379 727h3v3h-3zM383 731h3v3h-3zM391 730h3v3h-3zM399 730h3v3h-3zM403 731h3v1h-3zM407 733h3v3h-3zM420 730h3v3h-3zM424 733h3v1h-3zM428 732h3v4h-3zM436 732h3v3h-3zM444 732h3v3h-3zM448 732h3v3h-3zM456 724h3v3h-3zM460 721h3v12h-3zM476 720h3v7h-3zM496 714h3v4h-3zM513 717h3v4h-3zM517 724h3v3h-3zM521 725h3v1h-3zM525 724h3v3h-3zM533 726h3v3h-3zM537 726h3v3h-3zM541 728h3v1h-3zM545 729h3v3h-3zM557 731h3v5h-3zM561 737h3v1h-3zM573 735h3v3h-3zM585 733h3v1h-3zM589 736h3v5h-3zM602 734h3v5h-3zM606 742h3v4h-3zM610 741h3v3h-3zM650 698h3v3h-3zM658 687h3v10h-3zM670 683h3v1h-3zM674 674h3v3h-3zM678 681h3v6h-3zM682 690h3v1h-3zM686 689h3v3h-3zM690 688h3v3h-3zM703 689h3v6h-3zM715 697h3v4h-3zM719 703h3v1h-3z" fill="#0000d0"/>
<polyline points="1.5,293.5 4.5,294.5 8.5,299.5 12.5,302.5 16.5,298.5 20.5,299.5 24.5,298.5 28.5,295.5 32.5,295.5 36.5,296.5 40.5,299.5 44.5,302.5 48.5,302.5 52.5,306.5 56.5,307.5 60.5,307.5 64.5,305.5 68.5,300.5 72.5,294.5 76.5,289.5 80.5,289.5 84.5,287.5 88.5,287.5 92.5,285.5 96.5,285.5 100.5,286.5 104.5,287.5 108.5,292.5 112.5,299.5 116.5,302.5 120.5,305.5 124.5,309.5 128.5,310.5 132.5,311.5 136.5,313.5 140.5,316.5 144.5,316.5 148.5,317.5 152.5,318.5 156.5,318.5 160.5,319.5 164.5,323.5 169.5,324.5 174.5,324.5 178.5,324.5 182.5,322.5 186.5,320.5 190.5,317.5 194.5,316.5 198.5,316.5 202.5,314.5 206.5,314.5 210.5,309.5 214.5,305.5 218.5,299.5 222.5,296.5 227.5,293.5 231.5,293.5 235.5,293.5 239.5,294.5 243.5,294.5 247.5,293.5 251.5,292.5 255.5,291.5 259.5,291.5 263.5,293.5 267.5,295.5 271.5,296.5 275.5,297.5 279.5,297.5 283.5,297.5 287.5,296.5 291.5,294.5 295.5,293.5 299.5,293.5 303.5,294.5 307.5,296.5 311.5,298.5 315.5,299.5 320.5,299.5 324.5,299.5 328.5,302.5 332.5,303.5 336.5,303.5 340.5,305.5 344.5,307.5 348.5,307.5 352.5,307.5 356.5,307.5 360.5,308.5 364.5,310.5 368.5,312.5 372.5,313.5 376.5,314.5 380.5,315.5 384.5,316.5 388.5,317.5 392.5,319.5 396.5,320.5 400.5,320.5 404.5,320.5 408.5,322.5 413.5,323.5 417.5,324.5 421.5,325.5 425.5,324.5 429.5,324.5 433.5,324.5 437.5,326.5 441.5,328.5 445.5,332.5 449.5,334.5 453.5,334.5 457.5,333.5 460.5,338.5 463.5,342.5 465.5,344.5 469.5,345.5 473.5,346.5 477.5,340.5 481.5,326.5 485.5,316.5 489.5,306.5 493.5,297.5 497.5,291.5 501.5,286.5 506.5,283.5 510.5,277.5 514.5,277.5 518.5,277.5 522.5,278.5 526.5,281.5 530.5,284.5 534.5,285.5 538.5,286.5 542.5,287.5 546.5,294.5 550.5,302.5 554.5,308.5 558.5,316.5 562.5,324.5 566.5,325.5 570.5,329.5 574.5,329.5 578.5,328.5 582.5,328.5 586.5,328.5 590.5,329.5 594.5,328.5 598.5,319.5 603.5,315.5 607.5,312.5 611.5,310.5 615.5,309.5 620.5,309.5 624.5,308.5 629.5,307.5 634.5,308.5 639.5,308.5 643.5,310.5 651.5,311.5 655.5,303.5 659.5,307.5 663.5,309.5 666.5,313.5 671.5,322.5 675.5,322.5 679.5,316.5 680.5,314.5 683.5,307.5 687.5,300.5 691.5,296.5 695.5,296.5 700.5,292.5 704.5,283.5 708.5,278.5 712.5,273.5 716.5,269.5 720.5,268.5 723.5,268.5" stroke="#000080" stroke-width="1" fill="none"/>
<path d="M465 382.5H481M465.5 382.5l5 3" stroke="#0000d0" stroke-width="1" fill="none"/>
<path d="M465 564.5H481M465.5 564.5l5 3" stroke="#0000d0" stroke-width="1" fill="none"/>
</svg>
<div class="a" id="edwin"></div>
<div class="a" style="left:721px;top:14px;width:916px;height:50px;background:#fff;"></div>
<div class="a" style="left:721px;top:64px;width:916px;height:1px;background:#a8a8a8;"></div>
<div class="a" style="left:721px;top:65px;width:598px;height:29px;background:#f0f0f0;border-right:1px solid #a0a0a0;"></div>
<div class="a" style="left:1319px;top:65px;width:318px;height:29px;background:#fff;"></div>
<div class="a" style="left:721px;top:65px;width:916px;height:1px;background:#fdfdfd;"></div>
<div class="a" style="left:721px;top:94px;width:916px;height:1px;background:#f0f0f0;"></div>
<div class="a" style="left:721px;top:95px;width:916px;height:1px;background:#6c6c6c;"></div>
<div class="a" style="left:722px;top:96px;width:915px;height:1px;background:#a4a4a4;"></div>
<div class="a" style="left:721px;top:96px;width:1px;height:427px;background:#f4f4f4;"></div>
<div class="a" style="left:722px;top:96px;width:1px;height:427px;background:#6c6c6c;"></div>
<div class="a" style="left:723px;top:97px;width:895px;height:409px;background:#fff;"></div>
<div class="a" style="left:723px;top:97px;width:20px;height:409px;background:#e6e6e6;"></div>
<div class="a" style="left:1636px;top:96px;width:1px;height:410px;background:#fff;"></div>
<div class="a" style="left:1618px;top:96px;width:18px;height:410px;background:#f6f6f6;background-image:repeating-conic-gradient(#fff 0 25%,#ececec 0 50%);background-size:2px 2px;"></div>
<div class="a" style="left:1618px;top:96px;width:17px;height:7px;background:#f0f0f0;border:1px solid #fff;border-right:1px solid #707070;border-bottom:2px solid #707070;"></div>
<div class="a" style="left:1618px;top:103px;width:17px;height:17px;background:#f0f0f0;border:1px solid #fff;border-right:1px solid #707070;border-bottom:1px solid #707070;box-shadow:inset -1px -1px 0 #a8a8a8;"></div>
<div class="arr" style="left:1623px;top:109px;border-left-width:4px;border-right-width:4px;border-top:none;border-bottom:4px solid #a0a0a0"></div>
<div class="a" style="left:723px;top:506px;width:914px;height:17px;background:#f6f6f6;background-image:repeating-conic-gradient(#fff 0 25%,#ececec 0 50%);background-size:2px 2px;"></div>
<div class="a" style="left:723px;top:506px;width:7px;height:17px;background:#f0f0f0;border:1px solid #fff;border-right:2px solid #707070;border-bottom:1px solid #707070;"></div>
<div class="a" style="left:730px;top:506px;width:17px;height:17px;background:#f0f0f0;border:1px solid #fff;border-right:1px solid #707070;border-bottom:1px solid #707070;box-shadow:inset -1px -1px 0 #a8a8a8;"></div>
<div class="arr" style="left:735px;top:510px;border-top:4px solid transparent;border-bottom:4px solid transparent;border-left:none;border-right:4px solid #a0a0a0"></div>
<div class="a" style="left:721px;top:523px;width:916px;height:8px;background:#f0f0f0;"></div>
<div class="a" style="left:721px;top:523px;width:916px;height:1px;background:#fff;"></div>
<div class="a" style="left:721px;top:531px;width:916px;height:19px;background:linear-gradient(#e4ebf4 0,#e4ebf4 1px,#b9c8da 1px,#d9e4f1 100%);border-top:1px solid #6a6a6a;border-left:1px solid #6a6a6a;"></div>
<div class="a" style="left:721px;top:550px;width:916px;height:2px;background:#fbfbfb;"></div>
<div class="a" style="left:721px;top:552px;width:916px;height:177px;background:#fff;border-top:1px solid #6a6a6a;border-left:1px solid #6a6a6a;"></div>
<div class="a" style="left:722px;top:553px;width:915px;height:1px;background:#a8a8a8;"></div>
<div class="a" style="left:722px;top:553px;width:1px;height:175px;background:#a8a8a8;"></div>
<div class="a" style="left:723px;top:554px;width:914px;height:18px;background:#f0f0f0;border-bottom:1px solid #a0a0a0;"></div>
<div class="a" style="left:871px;top:554px;width:2px;height:18px;background:#fff;border-left:1px solid #a0a0a0;"></div>
<div class="a" style="left:971px;top:554px;width:2px;height:18px;background:#fff;border-left:1px solid #a0a0a0;"></div>
<div class="a" style="left:721px;top:728px;width:916px;height:20px;background:#f0f0f0;border-top:1px solid #6a6a6a;"></div>
<svg class="a" style="left:721px;top:65px" width="600" height="30" viewBox="721 65 600 30">
<defs><linearGradient id="gnew" x1="0" y1="0" x2="0" y2="1"><stop offset="0" stop-color="#fff"/><stop offset="0.25" stop-color="#f4ffff"/><stop offset="1" stop-color="#74e4e6"/></linearGradient><linearGradient id="gfold" x1="0" y1="0" x2="1" y2="1"><stop offset="0" stop-color="#fff"/><stop offset="1" stop-color="#ffe860"/></linearGradient><linearGradient id="gflap" x1="0" y1="0" x2="0" y2="1"><stop offset="0" stop-color="#d8d000"/><stop offset="1" stop-color="#8c8600"/></linearGradient><linearGradient id="gundo" x1="0" y1="0" x2="1" y2="0"><stop offset="0" stop-color="#e8f8ff"/><stop offset="0.6" stop-color="#38b8dc"/><stop offset="1" stop-color="#1890b8"/></linearGradient><linearGradient id="gblue" x1="0" y1="0" x2="1" y2="0"><stop offset="0" stop-color="#00f"/><stop offset="0.3" stop-color="#6cf"/><stop offset="0.55" stop-color="#00c"/><stop offset="1" stop-color="#006"/></linearGradient><linearGradient id="gred" x1="0" y1="0" x2="1" y2="0"><stop offset="0" stop-color="#c00"/><stop offset="0.3" stop-color="#f9c"/><stop offset="0.55" stop-color="#f00"/><stop offset="1" stop-color="#800"/></linearGradient></defs>
<path d="M724.5 71l1.6-1.6" stroke="#a8a8a8" stroke-width="1.2"/>
<path d="M724.5 76l1.6-1.6" stroke="#a8a8a8" stroke-width="1.2"/>
<path d="M724.5 81l1.6-1.6" stroke="#a8a8a8" stroke-width="1.2"/>
<path d="M724.5 86l1.6-1.6" stroke="#a8a8a8" stroke-width="1.2"/>
<path d="M724.5 91l1.6-1.6" stroke="#a8a8a8" stroke-width="1.2"/>
<path d="M813.5 69.5V92" stroke="#a0a0a0" stroke-width="1"/>
<path d="M875.5 69.5V92" stroke="#a0a0a0" stroke-width="1"/>
<path d="M964.5 69.5V92" stroke="#a0a0a0" stroke-width="1"/>
<path d="M1026.5 69.5V92" stroke="#a0a0a0" stroke-width="1"/>
<path d="M1142.5 69.5V92" stroke="#a0a0a0" stroke-width="1"/>
<path d="M1258.5 69.5V92" stroke="#a0a0a0" stroke-width="1"/>
<rect x="734.6" y="71.6" width="15" height="17.6" fill="url(#gnew)" stroke="#000" stroke-width="1.2"/><rect x="734.6" y="84.5" width="4.8" height="4.7" fill="#fff" stroke="#000" stroke-width="1.1"/><path d="M735.4 85.3l3.4 3.4" stroke="#000" stroke-width="0.9"/>
<path d="M759.6 88.4v-12l1-1.2h4l1.6 2.2h8.2l.6 1v3.6" fill="url(#gfold)" stroke="#000" stroke-width="1.2" stroke-linejoin="round"/><path d="M759.8 88.4l5.2-5.6h13.8l-5 5.6z" fill="url(#gflap)" stroke="#000" stroke-width="1.1" stroke-linejoin="round"/><path d="M770.4 72.6c2.4-1.8 5.4-1.4 7.2 1.2" fill="none" stroke="#000" stroke-width="1.1"/><path d="M778.9 71.8v3.4h-3.4z" fill="#000"/>
<path d="M787.4 71.2h14.6l3 3v13.8l-1 1h-15.6l-1-1z" fill="#9c9c9c"/><rect x="791" y="81" width="10" height="7" fill="#f0f0f0"/><rect x="797" y="72.2" width="2" height="3" fill="#f0f0f0"/>
<path d="M826.4 70.600h9.400v1.400h-1.400v14.400l2.200 2v1.400h-11v-1.400l2.200-2v-14.400h-1.400z" fill="#fff" stroke="#000" stroke-width="1.1" stroke-linejoin="miter"/><path d="M828.5 79h5.200v7.200l2 1.900v.8h-9.200v-.8l2-1.900z" fill="#f0f"/><path d="M829.700 79.400v7.400" stroke="#ff0" stroke-width="0.9"/><rect x="827.6" y="87.400" width="1.200" height="1.100" fill="#ff0"/><path d="M831.600 73.500h2.200M832.400 75.500h1.400M831.600 77.500h2.200M832.400 81.500h1.400M831.600 83.500h2.200" stroke="#000" stroke-width="0.9"/>
<path d="M849.6 74.6l1-1.2h9.6l1 1v2.2l-1 1h-3.2l-.8 1.4v4h-2.6v-4l-.8-1.4h-2.2l-1-1z" fill="#e4e2dc" stroke="#000" stroke-width="1.1" stroke-linejoin="round"/><rect x="861.4" y="70.6" width="3.6" height="4.6" fill="#e8e8e8" stroke="#000" stroke-width="1"/><path d="M863.6 75v8" stroke="#000" stroke-width="1.6"/><path d="M862.4 79v4" stroke="#ddd" stroke-width="1"/><rect x="853.6" y="83" width="5" height="7.6" fill="url(#gblue)" stroke="#000" stroke-width="0.6"/><rect x="860.6" y="83" width="5" height="7.6" fill="url(#gred)" stroke="#000" stroke-width="0.6"/>
<path d="M886.8 70.800c1.600 1 6 9.200 6.800 11.400l-1.400 1.400c-2.600-3-5.400-9-5.400-12.800z" fill="#e8e8e8" stroke="#000" stroke-width="0.9" stroke-linejoin="round"/><path d="M898.600 70.400c-1.600 1-6.200 9.600-7 11.800l1.400 1.400c2.600-3 5.600-9.400 5.600-13.200z" fill="#d8d8d8" stroke="#000" stroke-width="0.9" stroke-linejoin="round"/><ellipse cx="889" cy="86.600" rx="3.300" ry="2.900" fill="#000" transform="rotate(-25 889 86.6)"/><ellipse cx="889" cy="86.600" rx="2.300" ry="1.900" fill="#00b4c4" transform="rotate(-25 889 86.6)"/><ellipse cx="889" cy="86.700" rx="1" ry="0.800" fill="#f0f0f0" stroke="#000" stroke-width="0.5"/><ellipse cx="896.700" cy="85.600" rx="3" ry="3.500" fill="#000"/><ellipse cx="896.700" cy="85.600" rx="2" ry="2.500" fill="#00b4c4"/><ellipse cx="896.700" cy="85.600" rx="0.800" ry="1.200" fill="#f0f0f0" stroke="#000" stroke-width="0.5"/>
<path d="M911 70h8l10.2 10.2v9.8h-11.2v-3.2h-3.6v-3.6h-3.4z" fill="#9c9c9c"/>
<rect x="939.6" y="71.8" width="13" height="16" fill="#a4a000" stroke="#2a1800" stroke-width="1.2"/><path d="M943 72.6l1.6-2.4h3l1.6 2.4v1.2h-6.2z" fill="#f0c840" stroke="#2a1800" stroke-width="0.8"/><circle cx="946.1" cy="72.4" r="0.9" fill="#555"/><path d="M945.6 79.6h9v7.6l-2.4 2.6h-6.6z" fill="#fff" stroke="#2a1800" stroke-width="1.2" stroke-linejoin="round"/><path d="M947.4 82h5.4M947.4 84h3.4" stroke="#222" stroke-width="0.9"/><path d="M952 87.4h2.4l-2.4 2.4z" fill="#ccc"/>
<path d="M979.4 70.2l7.6 8h-4.6c-.6 4 1.6 6 5.4 6.4h3.4c1 0 1.2 1.6 0 2l-3 1c-5.4 0-9.6-3.4-9.8-9.4h-6.2z" fill="url(#gundo)" stroke="#000" stroke-width="1.1" stroke-linejoin="round"/>
<path d="M999 74.6c.4-2.4 3-3.4 6.600-3.400c5.4 0 8.600 3.600 8.600 9.800h5l-7.600 8.200l-7.600-8.200h4.800c0-3.400-1.400-5.400-4.800-5.400c-2 0-3 .4-3.600.8c-.8.400-1.600-.400-1.400-1.800z" fill="#9c9c9c"/>
<circle cx="1040.6" cy="76.4" r="6" fill="#e9e9e1" stroke="#2c2414" stroke-width="1.3"/><circle cx="1040.6" cy="76.4" r="3.9" fill="#b9e1d1" stroke="#2c2414" stroke-width="1"/><circle cx="1039.2" cy="75" r="1" fill="#fff"/><path d="M1045 81l2.600 2.400" stroke="#222" stroke-width="1.2"/><path d="M1047.8 83.6l4.800 4.400" stroke="#2c2414" stroke-width="3.600" stroke-linecap="round"/><path d="M1047.8 83.600l4.800 4.400" stroke="#e8a858" stroke-width="2" stroke-linecap="round"/>
<path d="M1064.4 70h6.400l3.400 3.400h2.400v-2l4 4.400l-4 4.400v-2h-2.400l-3.600 3.600h-1.400v3.200h1v5.200h-4.400v-5.200h1v-3.200h-1.400l-3.600-3.600v-4.800z" fill="#9c9c9c"/>
<path d="M1105 70h-6.400l-3.400 3.400h-2.400v-2l-4 4.400l4 4.400v-2h2.400l3.600 3.600h1.400v3.200h-1v5.200h4.400v-5.200h-1v-3.200h1.400l3.600-3.600v-4.800z" fill="#9c9c9c"/>
<circle cx="1122.4" cy="77" r="5.4" fill="#e9e9e1" stroke="#2c2414" stroke-width="1.2"/><circle cx="1122.4" cy="77" r="3.4" fill="#c4e4d8" stroke="#2c2414" stroke-width="0.9"/><path d="M1126.6 81.4l2.400 2.200" stroke="#222" stroke-width="1.2"/><path d="M1129 83.600l4.400 4" stroke="#2c2414" stroke-width="3.400" stroke-linecap="round"/><path d="M1129 83.600l4.400 4" stroke="#e8a858" stroke-width="1.900" stroke-linecap="round"/><path d="M1119.400 72.800h5v-2l3.400 3l-3.400 3v-2h-5z" fill="#20d840" stroke="#063" stroke-width="0.600"/><path d="M1124.600 79.400h-5v-2l-3.400 3l3.400 3v-2h5z" fill="#20d840" stroke="#063" stroke-width="0.600"/>
<path d="M1150.600 74l2-2.600h5.400l1.800 1.400l1.800-1.400h5.400l2 2.600v12.600h-7l-2.200 1.400l-2.200-1.400h-7z" fill="#f8b848" stroke="#111" stroke-width="1.1" stroke-linejoin="round"/><path d="M1152.400 72.400h5.400l1.800 1.400v11l-1.800-1h-5.400zM1167 72.400h-5.400l-1.800 1.400v11l1.800-1h5.400z" fill="#fff" stroke="#111" stroke-width="0.9" stroke-linejoin="round"/><path d="M1153.600 75h3.600M1153.600 77h3.600M1153.600 79h3.600M1153.600 81h3.600M1162.400 75h3.600M1162.400 77h2.400" stroke="#111" stroke-width="0.9"/><rect x="1161.400" y="80" width="2.800" height="9" fill="#f080f0" stroke="#111" stroke-width="0.700"/>
<path d="M1177 75l2.400-3.600h5.400l2 1.400l2-1.400h5.400l2.400 3.600v13h-7.600l-2.200 1.200l-2.200-1.200h-7.600z" fill="#9c9c9c"/><path d="M1180.6 74h4.400M1180.6 76.400h4.400M1189 74h4.400M1189 76.400h4.400M1189 78.800h4.400" stroke="#f0f0f0" stroke-width="1"/><path d="M1179.4 80h6.400v3.200h-6.400zM1188.6 82.400h6v3.200h-6z" fill="#f0f0f0"/>
<path d="M1204 75l2.400-3.600h5.400l2 1.400l2-1.400h5.400l2.400 3.600v13h-7.600l-2.200 1.200l-2.200-1.200h-7.600z" fill="#9c9c9c"/><path d="M1207 74h5M1207 76.400h5M1207 78.800h5M1207 81.200h5M1216 74h5M1216 76.400h5" stroke="#f0f0f0" stroke-width="1"/><path d="M1212.6 79.600h9v2.600h-5.600v3.200h-3.400z" fill="#f0f0f0"/>
<path d="M1232 75l2.400-3.600h5.400l2 1.400l2-1.400h5.400l2.400 3.600v13h-7.600l-2.200 1.200l-2.200-1.200h-7.600z" fill="#9c9c9c"/><path d="M1235 73.600l6.400 12.400M1249 73.600l-6.400 12.400M1242 74v14" stroke="#f0f0f0" stroke-width="1.100" fill="none"/><path d="M1235 73.400h5.800v12.800h-5.800zM1243.2 73.400h5.800v12.800h-5.800z" fill="none" stroke="#f0f0f0" stroke-width="0.900"/>
</svg>
<span class="cl" style="left:1267.5px;top:72px;color:#8e8e8e">/*</span><span class="cl" style="left:1294.5px;top:72px;color:#8e8e8e">//</span>
<div class="a" style="left:1518px;top:28px;width:10px;height:1px;background:#000;"></div>
<div class="a" style="left:1563px;top:23px;width:10px;height:10px;background:transparent;border:1px solid #000;"></div>
<svg class="a" style="left:1608px;top:22px" width="12" height="12" viewBox="0 0 12 12"><path d="M1 1L11 11M11 1L1 11" stroke="#000" stroke-width="1.1" fill="none"/></svg>
<div class="a" style="left:1580px;top:45px;width:18px;height:18px;background:#fff;border:1px solid #e4e4e4;"></div>
<div class="a" style="left:1599px;top:45px;width:18px;height:18px;background:#fff;border:1px solid #e4e4e4;"></div>
<div class="a" style="left:1618px;top:45px;width:18px;height:18px;background:#fff;border:1px solid #e4e4e4;"></div>
<div class="a" style="left:1585px;top:56px;width:6px;height:2px;background:#7c8ca4;"></div>
<svg class="a" style="left:1602px;top:48px" width="12" height="12" viewBox="0 0 12 12"><path d="M4.5 2.5h6v5h-2" stroke="#7c8ca4" stroke-width="1" fill="none"/><path d="M4 2h7" stroke="#7c8ca4" stroke-width="1.4"/><rect x="1.5" y="5.5" width="6" height="4" stroke="#7c8ca4" fill="#fff"/><path d="M1 5.3h7" stroke="#7c8ca4" stroke-width="1.4"/></svg>
<svg class="a" style="left:1621px;top:49px" width="12" height="12" viewBox="0 0 12 12"><path d="M2.5 2.5L9 9M9 2.5L2.5 9" stroke="#7c8ca4" stroke-width="2.2" fill="none"/></svg>
<svg class="a" style="left:729px;top:20px" width="16" height="16" viewBox="0 0 16 16"><defs><radialGradient id="gi" cx="0.45" cy="0.35" r="0.7"><stop offset="0" stop-color="#b4ff30"/><stop offset="0.55" stop-color="#48ee08"/><stop offset="1" stop-color="#149000"/></radialGradient></defs><circle cx="8" cy="8" r="7.6" fill="url(#gi)" stroke="#0b6a00" stroke-width="0.8"/><text x="8" y="11.2" text-anchor="middle" font-family="Liberation Sans,sans-serif" font-weight="bold" font-style="italic" font-size="8.5" fill="#064400" letter-spacing="-0.6">YL</text></svg>
<svg class="a" style="left:728px;top:45px" width="16" height="16" viewBox="0 0 16 16"><path d="M1.5 1v13.5H15" stroke="#111" stroke-width="1.2" fill="none"/><rect x="3.5" y="10" width="2" height="3.5" fill="#1a3cc8"/><rect x="6.5" y="8.5" width="2" height="5" fill="#d81818"/><rect x="9.5" y="7" width="2" height="6.5" fill="#d81818"/><rect x="12.5" y="9" width="2" height="4.5" fill="#1a3cc8"/><path d="M3 8l3.5-4 2 2L12 2.5l2.5 1.5" stroke="#e81818" stroke-width="1.1" fill="none"/></svg>
<div class="t" style="left:750.00px;top:20.50px;font-family:'Liberation Sans','Noto Sans CJK KR',sans-serif;font-size:12.6px;transform:scaleX(0.9089);transform-origin:0 50%;line-height:16px;height:16px">YesLanguage</div>
<div class="t" style="left:823.60px;top:20.50px;font-family:'Liberation Sans','Noto Sans CJK KR',sans-serif;font-size:12.6px;letter-spacing:0.6px;letter-spacing:-0.031px;line-height:16px;height:16px">편집기</div>
<div class="t" style="left:864.60px;top:20.50px;font-family:'Liberation Sans','Noto Sans CJK KR',sans-serif;font-size:12.6px;letter-spacing:0.000px;line-height:16px;height:16px">-</div>
<div class="t" style="left:873.90px;top:20.50px;font-family:'Liberation Sans','Noto Sans CJK KR',sans-serif;font-size:12.6px;letter-spacing:0.155px;line-height:16px;height:16px">[MA</div>
<div class="t" style="left:896.80px;top:20.50px;font-family:'Liberation Sans','Noto Sans CJK KR',sans-serif;font-size:12.6px;letter-spacing:0.867px;line-height:16px;height:16px">평균선</div>
<div class="t" style="left:937.60px;top:20.50px;font-family:'Liberation Sans','Noto Sans CJK KR',sans-serif;font-size:12.6px;transform:scaleX(0.7338);transform-origin:0 50%;line-height:16px;height:16px">&lt;</div>
<div class="t" style="left:943.60px;top:20.50px;font-family:'Liberation Sans','Noto Sans CJK KR',sans-serif;font-size:12.6px;letter-spacing:1.312px;line-height:16px;height:16px">지표</div>
<div class="t" style="left:969.60px;top:20.50px;font-family:'Liberation Sans','Noto Sans CJK KR',sans-serif;font-size:12.6px;transform:scaleX(0.7338);transform-origin:0 50%;line-height:16px;height:16px">&gt;</div>
<div class="t" style="left:975.40px;top:20.50px;font-family:'Liberation Sans','Noto Sans CJK KR',sans-serif;font-size:12.6px;transform:scaleX(0.8571);transform-origin:0 50%;line-height:16px;height:16px">]</div>
<div class="t" style="left:751.00px;top:45.50px;font-family:'Liberation Sans','Noto Sans CJK KR',sans-serif;font-size:12.6px;transform:scaleX(0.9423);transform-origin:0 50%;line-height:16px;height:16px">파일(F)</div>
<div class="t" style="left:804.00px;top:45.50px;font-family:'Liberation Sans','Noto Sans CJK KR',sans-serif;font-size:12.6px;transform:scaleX(0.9132);transform-origin:0 50%;line-height:16px;height:16px">편집(E)</div>
<div class="t" style="left:855.30px;top:45.50px;font-family:'Liberation Sans','Noto Sans CJK KR',sans-serif;font-size:12.6px;transform:scaleX(0.9582);transform-origin:0 50%;line-height:16px;height:16px">찾기(S)</div>
<div class="t" style="left:908.40px;top:45.50px;font-family:'Liberation Sans','Noto Sans CJK KR',sans-serif;font-size:12.6px;transform:scaleX(0.9833);transform-origin:0 50%;line-height:16px;height:16px">보기(V)</div>
<div class="t" style="left:962.60px;top:45.50px;font-family:'Liberation Sans','Noto Sans CJK KR',sans-serif;font-size:12.6px;transform:scaleX(0.9318);transform-origin:0 50%;line-height:16px;height:16px">창(W)</div>
<div class="t" style="left:1007.60px;top:45.50px;font-family:'Liberation Sans','Noto Sans CJK KR',sans-serif;font-size:12.6px;letter-spacing:-0.110px;line-height:16px;height:16px">도움말(H)</div>
<div class="t" style="left:725.50px;top:532.00px;font-family:'Liberation Sans','Noto Sans CJK KR',sans-serif;font-size:12.6px;transform:scaleX(0.9704);transform-origin:0 50%;line-height:16px;height:16px">오류</div>
<div class="t" style="left:730.00px;top:555.50px;font-family:'Liberation Sans','Noto Sans CJK KR',sans-serif;font-size:12.6px;letter-spacing:0.164px;line-height:16px;height:16px">이 름</div>
<div class="t" style="left:939.50px;top:555.50px;font-family:'Liberation Sans','Noto Sans CJK KR',sans-serif;font-size:12.6px;letter-spacing:0.414px;line-height:16px;height:16px">줄 수</div>
<div class="t" style="left:727.50px;top:575.30px;font-family:'Liberation Sans','Noto Sans CJK KR',sans-serif;font-size:12.6px;letter-spacing:0.086px;line-height:16px;height:16px">MA평균선</div>
<div class="t" style="left:722.80px;top:731.50px;font-family:'Liberation Sans','Noto Sans CJK KR',sans-serif;font-size:12.6px;transform:scaleX(0.8680);transform-origin:0 50%;line-height:16px;height:16px">Ready</div>
<span class="cl" style="left:743.3px;top:98px;color:#008000">//</span>
<span class="ck" style="left:768px;top:99px;color:#008000">참조종목을</span>
<span class="ck" style="left:856px;top:99px;color:#008000">외국인선물순매수</span>
<span class="ck" style="left:992px;top:99px;color:#008000">수량으로</span>
<span class="ck" style="left:1064px;top:99px;color:#008000">설정하게</span>
<span class="ck" style="left:1136px;top:99px;color:#008000">되면</span>
<span class="ck" style="left:1176px;top:99px;color:#008000">장초반에는</span>
<span class="ck" style="left:1264px;top:99px;color:#008000">다른</span>
<span class="ck" style="left:1304px;top:99px;color:#008000">결과치가</span>
<span class="ck" style="left:1376px;top:99px;color:#008000">나옵니다</span>
<span class="cl" style="left:1439.3px;top:98px;color:#008000">.</span>
<span class="cl" style="left:775.3px;top:114px;color:#008000">//</span>
<span class="ck" style="left:800px;top:115px;color:#008000">확인바랍니다</span>
<span class="cl" style="left:895.3px;top:114px;color:#008000">.</span>
<span class="cl" style="left:775.3px;top:130px;color:#0000ff">Var</span>
<span class="cl" style="left:799.3px;top:130px;color:#ff00ff">:</span>
<span class="ck" style="left:816px;top:131px;color:#000000">거래량</span>
<span class="cl" style="left:863.3px;top:130px;color:#000000">(0</span>
<span class="cl" style="left:879.3px;top:130px;color:#ff00ff">);</span>
<span class="ck" style="left:776px;top:147px;color:#000000">거래량</span>
<span class="cl" style="left:831.3px;top:146px;color:#ff00ff">=</span>
<span class="cl" style="left:847.3px;top:146px;color:#3366ff">Abs</span>
<span class="cl" style="left:871.3px;top:146px;color:#ff00ff">(</span>
<span class="cl" style="left:879.3px;top:146px;color:#3366ff">Data2</span>
<span class="cl" style="left:919.3px;top:146px;color:#ff00ff">(</span>
<span class="cl" style="left:927.3px;top:146px;color:#0000ff">OI</span>
<span class="cl" style="left:943.3px;top:146px;color:#ff00ff">[</span>
<span class="cl" style="left:951.3px;top:146px;color:#000000">0</span>
<span class="cl" style="left:959.3px;top:146px;color:#ff00ff">]-</span>
<span class="cl" style="left:975.3px;top:146px;color:#0000ff">OI</span>
<span class="cl" style="left:991.3px;top:146px;color:#ff00ff">[</span>
<span class="cl" style="left:999.3px;top:146px;color:#000000">1</span>
<span class="cl" style="left:1007.3px;top:146px;color:#ff00ff">]));</span>
<span class="cl" style="left:751.3px;top:178px;color:#0000ff">If</span>
<span class="cl" style="left:775.3px;top:178px;color:#ff00ff">(</span>
<span class="cl" style="left:783.3px;top:178px;color:#0000ff">sDate</span>
<span class="cl" style="left:831.3px;top:178px;color:#ff00ff">==</span>
<span class="cl" style="left:855.3px;top:178px;color:#3366ff">CurrentDate</span>
<span class="cl" style="left:943.3px;top:178px;color:#ff00ff">)</span>
<span class="cl" style="left:959.3px;top:178px;color:#0000ff">Then</span>
<span class="cl" style="left:775.3px;top:194px;color:#ff00ff">{</span>
<span class="cl" style="left:807.3px;top:210px;color:#ff0000">MessageLog</span>
<span class="cl" style="left:887.3px;top:210px;color:#ff00ff">(</span>
<span class="cl" style="left:895.3px;top:210px;color:#008080">&quot;</span>
<span class="ck" style="left:904px;top:211px;color:#008080">거래량</span>
<span class="cl" style="left:951.3px;top:210px;color:#008080">1: %.2f,</span>
<span class="ck" style="left:1024px;top:211px;color:#008080">거래량</span>
<span class="cl" style="left:1071.3px;top:210px;color:#008080">2: %.2f&quot;</span>
<span class="cl" style="left:1135.3px;top:210px;color:#ff00ff">,</span>
<span class="cl" style="left:1151.3px;top:210px;color:#3366ff">ma</span>
<span class="cl" style="left:1167.3px;top:210px;color:#ff00ff">(</span>
<span class="ck" style="left:1176px;top:211px;color:#000000">거래량</span>
<span class="cl" style="left:1223.3px;top:210px;color:#000000">, 20</span>
<span class="cl" style="left:1255.3px;top:210px;color:#ff00ff">),</span>
<span class="cl" style="left:1279.3px;top:210px;color:#3366ff">ma</span>
<span class="cl" style="left:1295.3px;top:210px;color:#ff00ff">(</span>
<span class="cl" style="left:1303.3px;top:210px;color:#3366ff">Abs</span>
<span class="cl" style="left:1327.3px;top:210px;color:#ff00ff">(</span>
<span class="cl" style="left:1335.3px;top:210px;color:#3366ff">Data2</span>
<span class="cl" style="left:1375.3px;top:210px;color:#ff00ff">(</span>
<span class="cl" style="left:1383.3px;top:210px;color:#0000ff">OI</span>
<span class="cl" style="left:1399.3px;top:210px;color:#ff00ff">[</span>
<span class="cl" style="left:1407.3px;top:210px;color:#000000">0</span>
<span class="cl" style="left:1415.3px;top:210px;color:#ff00ff">]-</span>
<span class="cl" style="left:1431.3px;top:210px;color:#0000ff">OI</span>
<span class="cl" style="left:1447.3px;top:210px;color:#ff00ff">[</span>
<span class="cl" style="left:1455.3px;top:210px;color:#000000">1</span>
<span class="cl" style="left:1463.3px;top:210px;color:#ff00ff">]))</span>
<span class="cl" style="left:1487.3px;top:210px;color:#ff00ff">,</span>
<span class="cl" style="left:1503.3px;top:210px;color:#000000">20</span>
<span class="cl" style="left:1519.3px;top:210px;color:#ff00ff">));</span>
<span class="cl" style="left:775.3px;top:226px;color:#ff00ff">}</span>
<span class="cl" style="left:775.3px;top:258px;color:#0000ff">Var</span>
<span class="cl" style="left:799.3px;top:258px;color:#ff00ff">:</span>
<span class="ck" style="left:816px;top:259px;color:#000000">변수</span>
<span class="cl" style="left:847.3px;top:258px;color:#000000">(0</span>
<span class="cl" style="left:863.3px;top:258px;color:#ff00ff">,</span>
<span class="cl" style="left:879.3px;top:258px;color:#3366ff">Data3</span>
<span class="cl" style="left:919.3px;top:258px;color:#ff00ff">);</span>
<span class="ck" style="left:776px;top:275px;color:#000000">변수</span>
<span class="cl" style="left:815.3px;top:274px;color:#ff00ff">=</span>
<span class="cl" style="left:831.3px;top:274px;color:#3366ff">Data3</span>
<span class="cl" style="left:871.3px;top:274px;color:#ff00ff">(</span>
<span class="cl" style="left:879.3px;top:274px;color:#0000ff">C</span>
<span class="cl" style="left:887.3px;top:274px;color:#ff00ff">[</span>
<span class="cl" style="left:895.3px;top:274px;color:#000000">0</span>
<span class="cl" style="left:903.3px;top:274px;color:#ff00ff">]);</span>
<span class="cl" style="left:729.3px;top:162px;color:#000">5</span>
<span class="cl" style="left:725.5px;top:242px;color:#000">10</span>
<div class="a" id="dbwin"></div>
<div class="a" style="left:980px;top:282px;width:714px;height:30px;background:#fff;"></div>
<div class="a" style="left:980px;top:312px;width:714px;height:436px;background:#fff;border-top:1px solid #6e6e6e;border-left:1px solid #8a8a8a;"></div>
<div class="a" style="left:982px;top:313px;width:712px;height:19px;background:#f0f0f0;border-bottom:1px solid #a0a0a0;"></div>
<div class="a" style="left:1130px;top:313px;width:2px;height:19px;background:#fff;border-left:1px solid #a0a0a0;"></div>
<div class="a" style="left:1530px;top:313px;width:2px;height:19px;background:#fff;border-left:1px solid #a0a0a0;"></div>
<div class="t" style="left:989.00px;top:288.50px;font-family:'Liberation Sans','Noto Sans CJK KR',sans-serif;font-size:12.6px;letter-spacing:0.367px;line-height:16px;height:16px">디버깅</div>
<div class="t" style="left:988.50px;top:315.20px;font-family:'Liberation Sans','Noto Sans CJK KR',sans-serif;font-size:12.6px;transform:scaleX(0.9704);transform-origin:0 50%;line-height:16px;height:16px">시간</div>
<div class="t" style="left:1139.50px;top:315.20px;font-family:'Liberation Sans','Noto Sans CJK KR',sans-serif;font-size:12.6px;transform:scaleX(0.9704);transform-origin:0 50%;line-height:16px;height:16px">내용</div>
<div class="t" style="left:986.30px;top:334.50px;font-family:'Liberation Sans','Noto Sans CJK KR',sans-serif;font-size:12.6px;letter-spacing:0.009px;line-height:16px;height:16px">2018-06-01</div>
<div class="t" style="left:1060.30px;top:334.50px;font-family:'Liberation Sans','Noto Sans CJK KR',sans-serif;font-size:12.6px;transform:scaleX(0.9517);transform-origin:0 50%;line-height:16px;height:16px">9:02:00</div>
<div class="t" style="left:1138.60px;top:334.50px;font-family:'Liberation Sans','Noto Sans CJK KR',sans-serif;font-size:12.6px;line-height:16px;height:16px">거래량1: 246.60, 거래량2: 201.85</div>
<div class="t" style="left:986.30px;top:350.50px;font-family:'Liberation Sans','Noto Sans CJK KR',sans-serif;font-size:12.6px;letter-spacing:0.009px;line-height:16px;height:16px">2018-06-01</div>
<div class="t" style="left:1060.30px;top:350.50px;font-family:'Liberation Sans','Noto Sans CJK KR',sans-serif;font-size:12.6px;transform:scaleX(0.9517);transform-origin:0 50%;line-height:16px;height:16px">9:02:00</div>
<div class="t" style="left:1138.60px;top:350.50px;font-family:'Liberation Sans','Noto Sans CJK KR',sans-serif;font-size:12.6px;line-height:16px;height:16px">거래량1: 274.50, 거래량2: 201.85</div>
<div class="t" style="left:986.30px;top:366.50px;font-family:'Liberation Sans','Noto Sans CJK KR',sans-serif;font-size:12.6px;letter-spacing:0.009px;line-height:16px;height:16px">2018-06-01</div>
<div class="t" style="left:1060.30px;top:366.50px;font-family:'Liberation Sans','Noto Sans CJK KR',sans-serif;font-size:12.6px;transform:scaleX(0.9517);transform-origin:0 50%;line-height:16px;height:16px">9:02:00</div>
<div class="t" style="left:1138.60px;top:366.50px;font-family:'Liberation Sans','Noto Sans CJK KR',sans-serif;font-size:12.6px;line-height:16px;height:16px">거래량1: 301.00, 거래량2: 201.85</div>
<div class="t" style="left:986.30px;top:382.50px;font-family:'Liberation Sans','Noto Sans CJK KR',sans-serif;font-size:12.6px;letter-spacing:0.009px;line-height:16px;height:16px">2018-06-01</div>
<div class="t" style="left:1060.30px;top:382.50px;font-family:'Liberation Sans','Noto Sans CJK KR',sans-serif;font-size:12.6px;transform:scaleX(0.9517);transform-origin:0 50%;line-height:16px;height:16px">9:02:00</div>
<div class="t" style="left:1138.60px;top:382.50px;font-family:'Liberation Sans','Noto Sans CJK KR',sans-serif;font-size:12.6px;line-height:16px;height:16px">거래량1: 321.95, 거래량2: 196.10</div>
<div class="t" style="left:986.30px;top:398.50px;font-family:'Liberation Sans','Noto Sans CJK KR',sans-serif;font-size:12.6px;letter-spacing:0.009px;line-height:16px;height:16px">2018-06-01</div>
<div class="t" style="left:1060.30px;top:398.50px;font-family:'Liberation Sans','Noto Sans CJK KR',sans-serif;font-size:12.6px;transform:scaleX(0.9517);transform-origin:0 50%;line-height:16px;height:16px">9:04:00</div>
<div class="t" style="left:1138.60px;top:398.50px;font-family:'Liberation Sans','Noto Sans CJK KR',sans-serif;font-size:12.6px;line-height:16px;height:16px">거래량1: 324.90, 거래량2: 205.10</div>
<div class="t" style="left:986.30px;top:414.50px;font-family:'Liberation Sans','Noto Sans CJK KR',sans-serif;font-size:12.6px;letter-spacing:0.009px;line-height:16px;height:16px">2018-06-01</div>
<div class="t" style="left:1060.30px;top:414.50px;font-family:'Liberation Sans','Noto Sans CJK KR',sans-serif;font-size:12.6px;transform:scaleX(0.9517);transform-origin:0 50%;line-height:16px;height:16px">9:06:00</div>
<div class="t" style="left:1138.60px;top:414.50px;font-family:'Liberation Sans','Noto Sans CJK KR',sans-serif;font-size:12.6px;line-height:16px;height:16px">거래량1: 321.35, 거래량2: 206.45</div>
<div class="t" style="left:986.30px;top:430.50px;font-family:'Liberation Sans','Noto Sans CJK KR',sans-serif;font-size:12.6px;letter-spacing:0.009px;line-height:16px;height:16px">2018-06-01</div>
<div class="t" style="left:1060.30px;top:430.50px;font-family:'Liberation Sans','Noto Sans CJK KR',sans-serif;font-size:12.6px;transform:scaleX(0.9517);transform-origin:0 50%;line-height:16px;height:16px">9:08:00</div>
<div class="t" style="left:1138.60px;top:430.50px;font-family:'Liberation Sans','Noto Sans CJK KR',sans-serif;font-size:12.6px;line-height:16px;height:16px">거래량1: 320.30, 거래량2: 195.80</div>
<div class="t" style="left:986.30px;top:446.50px;font-family:'Liberation Sans','Noto Sans CJK KR',sans-serif;font-size:12.6px;letter-spacing:0.009px;line-height:16px;height:16px">2018-06-01</div>
<div class="t" style="left:1060.30px;top:446.50px;font-family:'Liberation Sans','Noto Sans CJK KR',sans-serif;font-size:12.6px;transform:scaleX(0.9517);transform-origin:0 50%;line-height:16px;height:16px">9:10:00</div>
<div class="t" style="left:1138.60px;top:446.50px;font-family:'Liberation Sans','Noto Sans CJK KR',sans-serif;font-size:12.6px;line-height:16px;height:16px">거래량1: 325.20, 거래량2: 191.75</div>
<div class="t" style="left:986.30px;top:462.50px;font-family:'Liberation Sans','Noto Sans CJK KR',sans-serif;font-size:12.6px;letter-spacing:0.009px;line-height:16px;height:16px">2018-06-01</div>
<div class="t" style="left:1060.30px;top:462.50px;font-family:'Liberation Sans','Noto Sans CJK KR',sans-serif;font-size:12.6px;transform:scaleX(0.9517);transform-origin:0 50%;line-height:16px;height:16px">9:12:00</div>
<div class="t" style="left:1138.60px;top:462.50px;font-family:'Liberation Sans','Noto Sans CJK KR',sans-serif;font-size:12.6px;line-height:16px;height:16px">거래량1: 309.00, 거래량2: 185.95</div>
<div class="t" style="left:986.30px;top:478.50px;font-family:'Liberation Sans','Noto Sans CJK KR',sans-serif;font-size:12.6px;letter-spacing:0.009px;line-height:16px;height:16px">2018-06-01</div>
<div class="t" style="left:1060.30px;top:478.50px;font-family:'Liberation Sans','Noto Sans CJK KR',sans-serif;font-size:12.6px;transform:scaleX(0.9517);transform-origin:0 50%;line-height:16px;height:16px">9:14:00</div>
<div class="t" style="left:1138.60px;top:478.50px;font-family:'Liberation Sans','Noto Sans CJK KR',sans-serif;font-size:12.6px;line-height:16px;height:16px">거래량1: 304.50, 거래량2: 195.60</div>
<div class="t" style="left:986.30px;top:494.50px;font-family:'Liberation Sans','Noto Sans CJK KR',sans-serif;font-size:12.6px;letter-spacing:0.009px;line-height:16px;height:16px">2018-06-01</div>
<div class="t" style="left:1060.30px;top:494.50px;font-family:'Liberation Sans','Noto Sans CJK KR',sans-serif;font-size:12.6px;transform:scaleX(0.9517);transform-origin:0 50%;line-height:16px;height:16px">9:16:00</div>
<div class="t" style="left:1138.60px;top:494.50px;font-family:'Liberation Sans','Noto Sans CJK KR',sans-serif;font-size:12.6px;line-height:16px;height:16px">거래량1: 281.90, 거래량2: 196.55</div>
<div class="t" style="left:986.30px;top:510.50px;font-family:'Liberation Sans','Noto Sans CJK KR',sans-serif;font-size:12.6px;letter-spacing:0.009px;line-height:16px;height:16px">2018-06-01</div>
<div class="t" style="left:1060.30px;top:510.50px;font-family:'Liberation Sans','Noto Sans CJK KR',sans-serif;font-size:12.6px;transform:scaleX(0.9517);transform-origin:0 50%;line-height:16px;height:16px">9:18:00</div>
<div class="t" style="left:1138.60px;top:510.50px;font-family:'Liberation Sans','Noto Sans CJK KR',sans-serif;font-size:12.6px;line-height:16px;height:16px">거래량1: 276.15, 거래량2: 197.40</div>
<div class="t" style="left:986.30px;top:526.50px;font-family:'Liberation Sans','Noto Sans CJK KR',sans-serif;font-size:12.6px;letter-spacing:0.009px;line-height:16px;height:16px">2018-06-01</div>
<div class="t" style="left:1060.30px;top:526.50px;font-family:'Liberation Sans','Noto Sans CJK KR',sans-serif;font-size:12.6px;transform:scaleX(0.9517);transform-origin:0 50%;line-height:16px;height:16px">9:20:00</div>
<div class="t" style="left:1138.60px;top:526.50px;font-family:'Liberation Sans','Noto Sans CJK KR',sans-serif;font-size:12.6px;line-height:16px;height:16px">거래량1: 261.75, 거래량2: 191.40</div>
<div class="t" style="left:986.30px;top:542.50px;font-family:'Liberation Sans','Noto Sans CJK KR',sans-serif;font-size:12.6px;letter-spacing:0.009px;line-height:16px;height:16px">2018-06-01</div>
<div class="t" style="left:1060.30px;top:542.50px;font-family:'Liberation Sans','Noto Sans CJK KR',sans-serif;font-size:12.6px;transform:scaleX(0.9517);transform-origin:0 50%;line-height:16px;height:16px">9:22:00</div>
<div class="t" style="left:1138.60px;top:542.50px;font-family:'Liberation Sans','Noto Sans CJK KR',sans-serif;font-size:12.6px;line-height:16px;height:16px">거래량1: 251.55, 거래량2: 185.45</div>
<div class="t" style="left:986.30px;top:558.50px;font-family:'Liberation Sans','Noto Sans CJK KR',sans-serif;font-size:12.6px;letter-spacing:0.009px;line-height:16px;height:16px">2018-06-01</div>
<div class="t" style="left:1060.30px;top:558.50px;font-family:'Liberation Sans','Noto Sans CJK KR',sans-serif;font-size:12.6px;transform:scaleX(0.9517);transform-origin:0 50%;line-height:16px;height:16px">9:24:00</div>
<div class="t" style="left:1138.60px;top:558.50px;font-family:'Liberation Sans','Noto Sans CJK KR',sans-serif;font-size:12.6px;line-height:16px;height:16px">거래량1: 241.95, 거래량2: 186.00</div>
<div class="t" style="left:986.30px;top:574.50px;font-family:'Liberation Sans','Noto Sans CJK KR',sans-serif;font-size:12.6px;letter-spacing:0.009px;line-height:16px;height:16px">2018-06-01</div>
<div class="t" style="left:1060.30px;top:574.50px;font-family:'Liberation Sans','Noto Sans CJK KR',sans-serif;font-size:12.6px;transform:scaleX(0.9517);transform-origin:0 50%;line-height:16px;height:16px">9:26:00</div>
<div class="t" style="left:1138.60px;top:574.50px;font-family:'Liberation Sans','Noto Sans CJK KR',sans-serif;font-size:12.6px;line-height:16px;height:16px">거래량1: 234.55, 거래량2: 189.75</div>
<div class="t" style="left:986.30px;top:590.50px;font-family:'Liberation Sans','Noto Sans CJK KR',sans-serif;font-size:12.6px;letter-spacing:0.009px;line-height:16px;height:16px">2018-06-01</div>
<div class="t" style="left:1060.30px;top:590.50px;font-family:'Liberation Sans','Noto Sans CJK KR',sans-serif;font-size:12.6px;transform:scaleX(0.9517);transform-origin:0 50%;line-height:16px;height:16px">9:28:00</div>
<div class="t" style="left:1138.60px;top:590.50px;font-family:'Liberation Sans','Noto Sans CJK KR',sans-serif;font-size:12.6px;line-height:16px;height:16px">거래량1: 224.40, 거래량2: 174.40</div>
<div class="t" style="left:986.30px;top:606.50px;font-family:'Liberation Sans','Noto Sans CJK KR',sans-serif;font-size:12.6px;letter-spacing:0.009px;line-height:16px;height:16px">2018-06-01</div>
<div class="t" style="left:1060.30px;top:606.50px;font-family:'Liberation Sans','Noto Sans CJK KR',sans-serif;font-size:12.6px;transform:scaleX(0.9517);transform-origin:0 50%;line-height:16px;height:16px">9:30:00</div>
<div class="t" style="left:1138.60px;top:606.50px;font-family:'Liberation Sans','Noto Sans CJK KR',sans-serif;font-size:12.6px;line-height:16px;height:16px">거래량1: 214.90, 거래량2: 162.50</div>
<div class="t" style="left:986.30px;top:622.50px;font-family:'Liberation Sans','Noto Sans CJK KR',sans-serif;font-size:12.6px;letter-spacing:0.009px;line-height:16px;height:16px">2018-06-01</div>
<div class="t" style="left:1060.30px;top:622.50px;font-family:'Liberation Sans','Noto Sans CJK KR',sans-serif;font-size:12.6px;transform:scaleX(0.9517);transform-origin:0 50%;line-height:16px;height:16px">9:32:00</div>
<div class="t" style="left:1138.60px;top:622.50px;font-family:'Liberation Sans','Noto Sans CJK KR',sans-serif;font-size:12.6px;line-height:16px;height:16px">거래량1: 187.50, 거래량2: 138.05</div>
<div class="t" style="left:986.30px;top:638.50px;font-family:'Liberation Sans','Noto Sans CJK KR',sans-serif;font-size:12.6px;letter-spacing:0.009px;line-height:16px;height:16px">2018-06-01</div>
<div class="t" style="left:1060.30px;top:638.50px;font-family:'Liberation Sans','Noto Sans CJK KR',sans-serif;font-size:12.6px;transform:scaleX(0.9517);transform-origin:0 50%;line-height:16px;height:16px">9:34:00</div>
<div class="t" style="left:1138.60px;top:638.50px;font-family:'Liberation Sans','Noto Sans CJK KR',sans-serif;font-size:12.6px;line-height:16px;height:16px">거래량1: 160.15, 거래량2: 130.80</div>
<div class="t" style="left:986.30px;top:654.50px;font-family:'Liberation Sans','Noto Sans CJK KR',sans-serif;font-size:12.6px;letter-spacing:0.009px;line-height:16px;height:16px">2018-06-01</div>
<div class="t" style="left:1060.30px;top:654.50px;font-family:'Liberation Sans','Noto Sans CJK KR',sans-serif;font-size:12.6px;transform:scaleX(0.9517);transform-origin:0 50%;line-height:16px;height:16px">9:36:00</div>
<div class="t" style="left:1138.60px;top:654.50px;font-family:'Liberation Sans','Noto Sans CJK KR',sans-serif;font-size:12.6px;line-height:16px;height:16px">거래량1: 135.25, 거래량2: 119.10</div>
<div class="t" style="left:986.30px;top:670.50px;font-family:'Liberation Sans','Noto Sans CJK KR',sans-serif;font-size:12.6px;letter-spacing:0.009px;line-height:16px;height:16px">2018-06-01</div>
<div class="t" style="left:1060.30px;top:670.50px;font-family:'Liberation Sans','Noto Sans CJK KR',sans-serif;font-size:12.6px;transform:scaleX(0.9517);transform-origin:0 50%;line-height:16px;height:16px">9:38:00</div>
<div class="t" style="left:1138.60px;top:670.50px;font-family:'Liberation Sans','Noto Sans CJK KR',sans-serif;font-size:12.6px;line-height:16px;height:16px">거래량1: 108.45, 거래량2: 108.45</div>
<div class="t" style="left:986.30px;top:686.50px;font-family:'Liberation Sans','Noto Sans CJK KR',sans-serif;font-size:12.6px;letter-spacing:0.009px;line-height:16px;height:16px">2018-06-01</div>
<div class="t" style="left:1060.30px;top:686.50px;font-family:'Liberation Sans','Noto Sans CJK KR',sans-serif;font-size:12.6px;transform:scaleX(0.9517);transform-origin:0 50%;line-height:16px;height:16px">9:40:00</div>
<div class="t" style="left:1138.60px;top:686.50px;font-family:'Liberation Sans','Noto Sans CJK KR',sans-serif;font-size:12.6px;line-height:16px;height:16px">거래량1: 88.20, 거래량2: 88.20</div>
<div class="t" style="left:986.30px;top:702.50px;font-family:'Liberation Sans','Noto Sans CJK KR',sans-serif;font-size:12.6px;letter-spacing:0.009px;line-height:16px;height:16px">2018-06-01</div>
<div class="t" style="left:1060.30px;top:702.50px;font-family:'Liberation Sans','Noto Sans CJK KR',sans-serif;font-size:12.6px;transform:scaleX(0.9517);transform-origin:0 50%;line-height:16px;height:16px">9:42:00</div>
<div class="t" style="left:1138.60px;top:702.50px;font-family:'Liberation Sans','Noto Sans CJK KR',sans-serif;font-size:12.6px;line-height:16px;height:16px">거래량1: 77.00, 거래량2: 77.00</div>
<div class="t" style="left:986.30px;top:718.50px;font-family:'Liberation Sans','Noto Sans CJK KR',sans-serif;font-size:12.6px;letter-spacing:0.009px;line-height:16px;height:16px">2018-06-01</div>
<div class="t" style="left:1060.30px;top:718.50px;font-family:'Liberation Sans','Noto Sans CJK KR',sans-serif;font-size:12.6px;transform:scaleX(0.9517);transform-origin:0 50%;line-height:16px;height:16px">9:44:00</div>
<div class="t" style="left:1138.60px;top:718.50px;font-family:'Liberation Sans','Noto Sans CJK KR',sans-serif;font-size:12.6px;line-height:16px;height:16px">거래량1: 69.65, 거래량2: 69.65</div>
<div class="t" style="left:986.30px;top:734.50px;font-family:'Liberation Sans','Noto Sans CJK KR',sans-serif;font-size:12.6px;letter-spacing:0.009px;line-height:16px;height:16px">2018-06-01</div>
<div class="t" style="left:1060.30px;top:734.50px;font-family:'Liberation Sans','Noto Sans CJK KR',sans-serif;font-size:12.6px;transform:scaleX(0.9517);transform-origin:0 50%;line-height:16px;height:16px">9:46:00</div>
<div class="t" style="left:1138.60px;top:734.50px;font-family:'Liberation Sans','Noto Sans CJK KR',sans-serif;font-size:12.6px;line-height:16px;height:16px">거래량1: 66.50, 거래량2: 66.50</div>
<svg class="a" style="left:0;top:0;pointer-events:none" width="1694" height="748" viewBox="0 0 1694 748">
<g fill="none" stroke="#ed1c24" stroke-width="3.5" stroke-linecap="round" stroke-linejoin="round">
<path d="M817.5 239.5C819.6 239.6 824.4 240.1 830.0 240.2C835.6 240.3 842.7 240.1 851.0 240.0C859.3 239.9 870.7 239.7 880.0 239.6C889.3 239.5 900.0 239.2 907.0 239.5C914.0 239.8 917.3 240.5 922.0 241.2C926.7 241.9 931.0 242.9 935.0 243.7C939.0 244.5 942.8 245.0 946.0 246.0C949.2 247.0 951.7 248.2 954.0 249.5C956.3 250.8 958.4 252.2 960.0 254.0C961.6 255.8 962.8 258.0 963.5 260.0C964.2 262.0 964.0 264.0 964.0 266.0C964.0 268.0 963.8 270.0 963.5 272.0C963.2 274.0 962.7 276.0 962.0 278.0C961.3 280.0 960.7 281.8 959.5 284.0C958.3 286.2 956.6 288.8 955.0 291.0C953.4 293.2 951.8 294.8 950.0 297.0C948.2 299.2 946.2 302.0 944.0 304.5C941.8 307.0 939.5 309.6 937.0 312.0C934.5 314.4 931.7 316.8 929.0 319.0C926.3 321.2 925.0 323.9 921.0 325.0C917.0 326.1 910.5 325.7 905.0 325.8C899.5 325.9 894.5 325.9 888.0 325.6C881.5 325.3 872.3 324.9 866.0 324.2C859.7 323.5 855.7 322.6 850.0 321.5C844.3 320.4 837.8 318.9 832.0 317.7C826.2 316.5 820.0 315.4 815.0 314.5C810.0 313.6 806.3 313.0 802.0 312.0C797.7 311.0 792.7 309.8 789.0 308.3C785.3 306.8 782.8 304.9 780.0 303.0C777.2 301.1 774.7 299.2 772.0 297.0C769.3 294.8 766.4 292.2 764.0 290.0C761.6 287.8 759.3 286.2 757.5 284.0C755.7 281.8 754.1 279.2 753.0 277.0C751.9 274.8 751.2 273.2 751.0 271.0C750.8 268.8 751.0 266.2 751.5 264.0C752.0 261.8 752.9 259.3 754.0 257.5C755.1 255.7 756.5 254.2 758.0 253.0C759.5 251.8 760.7 251.0 763.0 250.0C765.3 249.0 768.8 247.9 772.0 247.0C775.2 246.1 778.5 245.3 782.0 244.7C785.5 244.1 789.3 243.8 793.0 243.5C796.7 243.2 800.3 242.9 804.0 242.8C807.7 242.7 811.5 242.8 815.0 242.8C818.5 242.8 823.3 243.0 825.0 243.0"/>
<path d="M1169.5 325.8C1168.6 325.3 1165.9 323.7 1164.0 323.0C1162.1 322.3 1160.3 321.9 1158.0 321.5C1155.7 321.1 1152.8 320.9 1150.0 320.8C1147.2 320.7 1144.2 320.6 1141.0 320.8C1137.8 321.0 1133.8 321.6 1131.0 322.0C1128.2 322.4 1125.6 322.8 1124.0 323.5C1122.4 324.2 1122.0 324.6 1121.5 326.0C1121.0 327.4 1121.1 329.7 1121.0 332.0C1120.9 334.3 1120.8 332.0 1120.7 340.0C1120.7 348.0 1120.7 367.0 1120.7 380.0C1120.7 393.0 1120.4 408.0 1120.5 418.0C1120.6 428.0 1121.2 431.3 1121.5 440.0C1121.8 448.7 1122.1 456.7 1122.0 470.0C1121.9 483.3 1121.1 505.0 1120.8 520.0C1120.5 535.0 1119.9 551.7 1120.0 560.0C1120.1 568.3 1121.1 562.0 1121.5 570.0C1121.9 578.0 1122.4 600.8 1122.3 608.0C1122.2 615.2 1121.1 606.0 1120.8 613.0C1120.5 620.0 1120.7 640.6 1120.7 650.0C1120.7 659.4 1120.7 666.2 1120.7 669.5" stroke-width="3" stroke-linecap="butt"/>
<path d="M1119.6 668.6C1124.7 668.6 1139.4 668.6 1150.0 668.6C1160.6 668.6 1170.3 668.6 1183.0 668.6C1195.7 668.6 1212.2 668.7 1226.0 668.9C1239.8 669.1 1253.7 669.6 1266.0 669.7C1278.3 669.8 1289.0 669.7 1300.0 669.7C1311.0 669.7 1325.3 669.5 1332.0 669.8C1338.7 670.1 1337.8 671.0 1340.0 671.5C1342.2 672.0 1343.5 672.5 1345.5 672.7C1347.5 672.9 1350.0 672.8 1352.0 672.8C1354.0 672.8 1356.6 672.6 1357.5 672.6" stroke-width="3" stroke-linecap="butt"/>
<path d="M1356.6 673.0C1356.7 671.8 1357.2 668.2 1357.4 666.0C1357.6 663.8 1357.7 665.2 1357.8 659.5C1357.9 653.8 1358.1 637.1 1357.8 631.5C1357.5 625.9 1356.4 631.2 1356.2 626.0C1356.0 620.8 1356.4 609.7 1356.5 600.0C1356.6 590.3 1356.8 574.7 1356.6 568.0C1356.4 561.3 1356.0 566.3 1355.3 560.0C1354.6 553.7 1353.1 540.0 1352.5 530.0C1351.9 520.0 1351.8 511.3 1351.5 500.0C1351.2 488.7 1350.9 471.8 1350.4 462.0C1349.9 452.2 1348.9 451.3 1348.6 441.0C1348.3 430.7 1348.6 413.8 1348.6 400.0C1348.6 386.2 1348.6 367.2 1348.5 358.0C1348.4 348.8 1348.3 349.8 1348.2 345.0C1348.1 340.2 1348.0 332.1 1348.0 329.5" stroke-width="3" stroke-linecap="butt"/>
<path d="M1155.0 328.8C1157.5 328.7 1164.2 328.1 1170.0 328.0C1175.8 327.9 1184.2 327.9 1190.0 328.0C1195.8 328.1 1200.2 328.0 1204.5 328.3C1208.8 328.6 1208.4 329.7 1216.0 330.0C1223.6 330.3 1236.0 330.2 1250.0 330.2C1264.0 330.2 1284.1 330.1 1300.0 330.0C1315.9 329.9 1337.5 330.0 1345.5 329.9C1353.5 329.8 1347.4 329.3 1347.8 329.2" stroke-width="3.2"/>
<path d="M1158.0 326.5C1160.0 326.5 1165.5 326.5 1170.0 326.6C1174.5 326.7 1180.0 327.1 1185.0 327.2C1190.0 327.3 1197.5 327.4 1200.0 327.5" stroke-width="2.5"/>
</g></svg>

</div>
</body></html>
